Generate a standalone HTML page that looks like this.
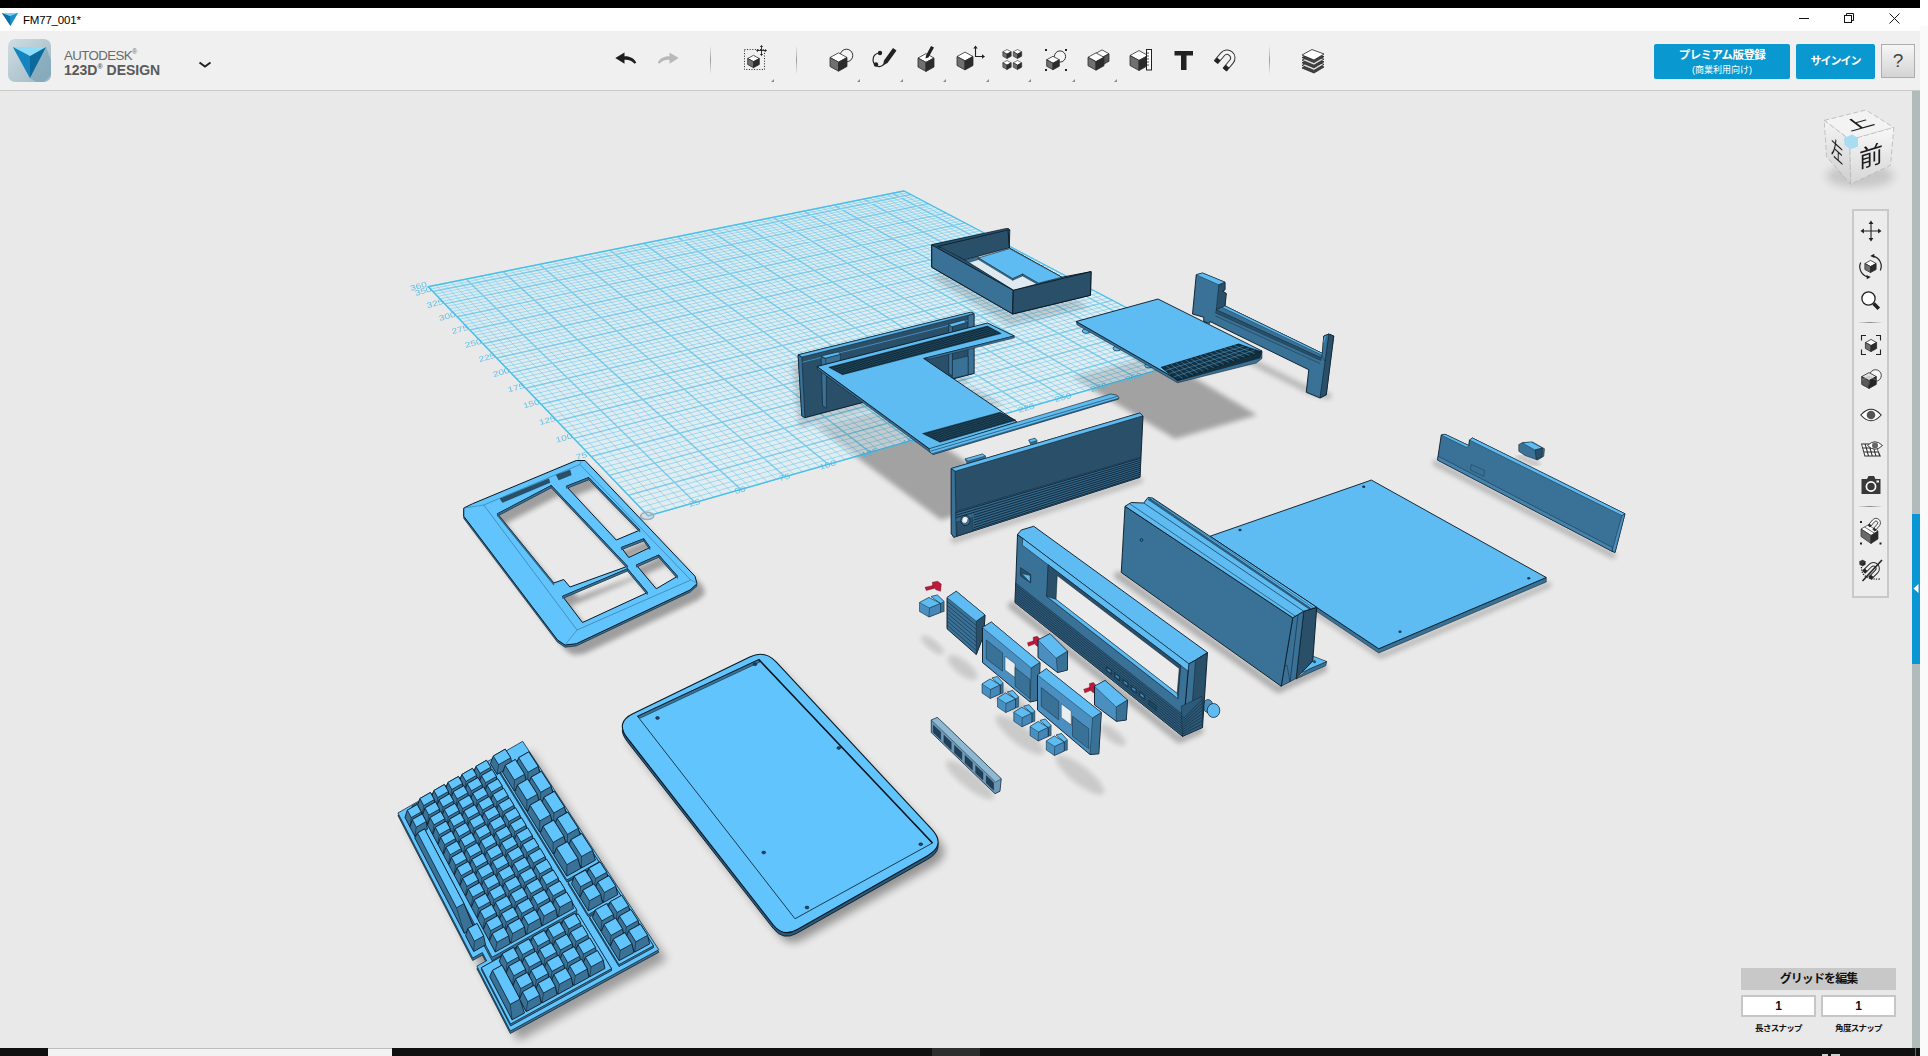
<!DOCTYPE html>
<html lang="ja"><head><meta charset="utf-8"><title>FM77_001*</title>
<style>
html,body{margin:0;padding:0}
body{width:1928px;height:1056px;overflow:hidden;position:relative;background:#e9e9e9;font-family:"Liberation Sans","Noto Sans CJK JP",sans-serif}
.abs{position:absolute}
</style></head><body>
<svg class="abs" style="left:0;top:0" width="1928" height="1056" viewBox="0 0 1928 1056">
<defs>
<filter id="b1" x="-20%" y="-20%" width="140%" height="140%"><feGaussianBlur stdDeviation="1.2"/></filter>
<filter id="b3" x="-20%" y="-20%" width="140%" height="140%"><feGaussianBlur stdDeviation="2.6"/></filter>
<filter id="b4" x="-20%" y="-20%" width="140%" height="140%"><feGaussianBlur stdDeviation="4"/></filter>
<filter id="b5" x="-20%" y="-20%" width="140%" height="140%"><feGaussianBlur stdDeviation="5"/></filter>
<linearGradient id="gfill" x1="0" y1="0" x2="1" y2="1"><stop offset="0" stop-color="#d2ecf7" stop-opacity="0.6"/><stop offset="1" stop-color="#e2f2f9" stop-opacity="0.55"/></linearGradient>
</defs>
<clipPath id="cg"><polygon points="648.16,515.89 1214.57,353.91 904.01,190.98 428.27,286.74"/></clipPath>
<clipPath id="cng"><path clip-rule="evenodd" d="M0 0H1928V1056H0Z M648.16 515.89L1214.57 353.91L904.01 190.98L428.27 286.74Z"/></clipPath>
<g clip-path="url(#cng)"><g opacity="0.30" filter="url(#b3)">
<polygon points="815,426 972,388 1003,405 908,422 1016,496 941,520" fill="#000"/>
<polygon points="1072,377 1156,355 1257,415 1175,439" fill="#000"/>
</g></g>
<polygon points="648.16,515.89 1214.57,353.91 904.01,190.98 428.27,286.74" fill="url(#gfill)"/>
<path d="M657.68 513.17L435.92 285.2M667.13 510.47L443.53 283.66M676.53 507.78L451.11 282.14M685.88 505.11L458.66 280.62M704.41 499.81L473.66 277.6M713.6 497.18L481.11 276.1M722.73 494.57L488.52 274.61M731.81 491.97L495.91 273.12M749.81 486.82L510.58 270.17M758.73 484.27L517.86 268.7M767.61 481.73L525.12 267.24M776.43 479.21L532.35 265.79M793.93 474.21L546.7 262.9M802.6 471.73L553.83 261.46M811.23 469.26L560.94 260.03M819.8 466.81L568.01 258.61M836.81 461.94L582.06 255.78M845.25 459.53L589.04 254.37M853.64 457.13L596 252.98M861.98 454.74L602.92 251.58M878.53 450.01L616.68 248.81M886.73 447.67L623.51 247.44M894.89 445.33L630.32 246.07M903.01 443.01L637.1 244.7M919.11 438.41L650.57 241.99M927.09 436.12L657.27 240.64M935.03 433.85L663.93 239.3M942.93 431.59L670.57 237.96M958.61 427.11L683.77 235.31M966.38 424.89L690.33 233.99M974.11 422.68L696.86 232.67M981.8 420.48L703.36 231.36M997.06 416.11L716.29 228.76M1004.63 413.95L722.72 227.47M1012.16 411.79L729.12 226.18M1019.65 409.65L735.49 224.9M1034.52 405.4L748.16 222.35M1041.89 403.29L754.45 221.08M1049.23 401.19L760.72 219.82M1056.53 399.11L766.97 218.56M1071.01 394.96L779.39 216.06M1078.2 392.91L785.56 214.82M1085.35 390.86L791.7 213.58M1092.46 388.83L797.83 212.35M1106.58 384.79L810 209.9M1113.59 382.79L816.05 208.68M1120.56 380.79L822.07 207.47M1127.49 378.81L828.08 206.26M1141.26 374.87L840.01 203.86M1148.09 372.92L845.94 202.67M1154.89 370.98L851.85 201.48M1161.65 369.04L857.74 200.29M1175.08 365.2L869.44 197.94M1181.74 363.3L875.26 196.76M1188.37 361.4L881.06 195.6M1194.97 359.51L886.83 194.44M1208.07 355.77L898.31 192.13M1214.57 353.91L904.01 190.98M644.12 511.68L1209.11 351.04M640.12 507.51L1203.69 348.19M636.15 503.37L1198.3 345.37M632.21 499.27L1192.96 342.57M624.45 491.18L1182.39 337.02M620.62 487.19L1177.17 334.28M616.83 483.24L1171.98 331.56M613.07 479.32L1166.83 328.86M605.64 471.58L1156.64 323.51M601.97 467.76L1151.6 320.87M598.34 463.97L1146.6 318.25M594.74 460.22L1141.63 315.64M587.63 452.81L1131.81 310.48M584.12 449.15L1126.95 307.93M580.64 445.52L1122.12 305.4M577.19 441.93L1117.33 302.89M570.37 434.82L1107.84 297.91M567.01 431.32L1103.15 295.45M563.67 427.84L1098.49 293M560.36 424.39L1093.86 290.58M553.82 417.57L1084.7 285.77M550.59 414.21L1080.17 283.39M547.39 410.87L1075.66 281.03M544.21 407.56L1071.19 278.68M537.93 401.01L1062.34 274.04M534.83 397.78L1057.96 271.74M531.75 394.58L1053.61 269.46M528.7 391.39L1049.28 267.19M522.67 385.11L1040.72 262.7M519.68 382L1036.49 260.48M516.73 378.92L1032.28 258.27M513.79 375.86L1028.09 256.07M507.99 369.81L1019.81 251.73M505.12 366.82L1015.71 249.58M502.28 363.86L1011.64 247.44M499.45 360.91L1007.59 245.32M493.87 355.1L999.57 241.11M491.11 352.22L995.6 239.03M488.37 349.36L991.66 236.96M485.65 346.53L987.74 234.9M480.27 340.93L979.98 230.83M477.61 338.15L976.13 228.81M474.97 335.4L972.31 226.81M472.35 332.67L968.51 224.81M467.17 327.27L960.99 220.87M464.6 324.6L957.26 218.91M462.06 321.95L953.56 216.97M459.53 319.31L949.88 215.04M454.53 314.1L942.58 211.21M452.06 311.53L938.97 209.32M449.61 308.97L935.38 207.43M447.17 306.43L931.81 205.56M442.34 301.4L924.73 201.85M439.96 298.91L921.23 200.01M437.59 296.44L917.74 198.18M435.23 293.99L914.28 196.36M430.58 289.14L907.42 192.76" stroke="#4fbfe9" stroke-width="0.9" opacity="0.5" fill="none"/>
<path d="M648.16 515.89L428.27 286.74M695.17 502.45L466.18 279.11M740.83 489.39L503.26 271.64M785.2 476.7L539.54 264.34M828.33 464.37L575.05 257.19M870.28 452.37L609.81 250.19M911.08 440.7L643.85 243.34M950.79 429.35L677.19 236.63M989.45 418.29L709.84 230.06M1027.11 407.52L741.84 223.62M1063.79 397.03L773.19 217.31M1099.54 386.81L803.92 211.12M1134.39 376.84L834.06 205.06M1168.38 367.12L863.6 199.11M1201.54 357.63L892.58 193.28M648.16 515.89L1214.57 353.91M628.32 495.21L1187.66 339.78M609.34 475.43L1161.72 326.18M591.17 456.5L1136.7 313.05M573.76 438.36L1112.57 300.39M557.07 420.97L1089.27 288.17M541.06 404.27L1066.75 276.35M525.67 388.24L1044.99 264.94M510.88 372.82L1023.94 253.89M496.65 357.99L1003.57 243.21M482.95 343.72L983.85 232.86M469.75 329.96L964.74 222.83M457.02 316.7L946.22 213.12M444.75 303.91L928.26 203.7M432.9 291.56L910.84 194.56M428.27 286.74L904.01 190.98" stroke="#3db8e6" stroke-width="1.4" opacity="0.6" fill="none"/>
<polygon points="648.16,515.89 1214.57,353.91 904.01,190.98 428.27,286.74" fill="none" stroke="#3bbdea" stroke-width="1.2" opacity="0.85"/>
<g font-family="Liberation Sans, sans-serif" font-size="8.5" fill="#4ab8e6" opacity="0.85" text-anchor="middle">
<text transform="translate(582.17 458.5) rotate(-16) scale(1.2,0.9)">75</text>
<text transform="translate(564.76 440.36) rotate(-16) scale(1.2,0.9)">100</text>
<text transform="translate(548.07 422.97) rotate(-16) scale(1.2,0.9)">125</text>
<text transform="translate(532.06 406.27) rotate(-16) scale(1.2,0.9)">150</text>
<text transform="translate(516.67 390.24) rotate(-16) scale(1.2,0.9)">175</text>
<text transform="translate(501.88 374.82) rotate(-16) scale(1.2,0.9)">200</text>
<text transform="translate(487.65 359.99) rotate(-16) scale(1.2,0.9)">225</text>
<text transform="translate(473.95 345.72) rotate(-16) scale(1.2,0.9)">250</text>
<text transform="translate(460.75 331.96) rotate(-16) scale(1.2,0.9)">275</text>
<text transform="translate(448.02 318.7) rotate(-16) scale(1.2,0.9)">300</text>
<text transform="translate(435.75 305.91) rotate(-16) scale(1.2,0.9)">325</text>
<text transform="translate(423.9 293.56) rotate(-16) scale(1.2,0.9)">350</text>
<text transform="translate(419.27 288.74) rotate(-16) scale(1.2,0.9)">360</text>
<text transform="translate(695.17 505.45) rotate(-16) scale(1.2,0.9)">25</text>
<text transform="translate(740.83 492.39) rotate(-16) scale(1.2,0.9)">50</text>
<text transform="translate(785.2 479.7) rotate(-16) scale(1.2,0.9)">75</text>
<text transform="translate(828.33 467.37) rotate(-16) scale(1.2,0.9)">100</text>
<text transform="translate(870.28 455.37) rotate(-16) scale(1.2,0.9)">125</text>
<text transform="translate(911.08 443.7) rotate(-16) scale(1.2,0.9)">150</text>
<text transform="translate(950.79 432.35) rotate(-16) scale(1.2,0.9)">175</text>
<text transform="translate(989.45 421.29) rotate(-16) scale(1.2,0.9)">200</text>
<text transform="translate(1027.11 410.52) rotate(-16) scale(1.2,0.9)">225</text>
<text transform="translate(1063.79 400.03) rotate(-16) scale(1.2,0.9)">250</text>
<text transform="translate(1099.54 389.81) rotate(-16) scale(1.2,0.9)">275</text>
<text transform="translate(1134.39 379.84) rotate(-16) scale(1.2,0.9)">300</text>
<text transform="translate(1168.38 370.12) rotate(-16) scale(1.2,0.9)">325</text>
<text transform="translate(1201.54 360.63) rotate(-16) scale(1.2,0.9)">350</text>
</g>
<ellipse cx="647.16" cy="515.89" rx="6.5" ry="3.6" fill="#a9bcc8" fill-opacity="0.35" stroke="#93acbb" stroke-width="1.6" opacity="0.9"/>
<g clip-path="url(#cg)"><g opacity="0.14" filter="url(#b3)">
<polygon points="815,426 972,388 1003,405 908,422 1016,496 941,520" fill="#000"/>
<polygon points="1072,377 1156,355 1257,415 1175,439" fill="#000"/>
<polygon points="929,276 1010,326 1089,307 1008,264" fill="#000"/>
<polygon points="792.09,364.77 965.13,322.2 967.99,383.45 798.94,427.64" fill="#000"/>
</g></g>
<polyline points="1118.25,575.5 1278.25,689.25 1323.25,668.5" fill="none" stroke="#000" stroke-width="8" stroke-linecap="round" stroke-linejoin="round" opacity="0.25" filter="url(#b3)"/>
<polyline points="1012,605.5 1179.5,739.25 1199.5,730.5" fill="none" stroke="#000" stroke-width="8" stroke-linecap="round" stroke-linejoin="round" opacity="0.25" filter="url(#b3)"/>
<polyline points="953.75,540.25 1140,480.25" fill="none" stroke="#000" stroke-width="6" stroke-linecap="round" stroke-linejoin="round" opacity="0.2" filter="url(#b3)"/>
<polyline points="1212,543 1380.75,656 1548.25,585" fill="none" stroke="#000" stroke-width="6" stroke-linecap="round" stroke-linejoin="round" opacity="0.2" filter="url(#b3)"/>
<polyline points="1435.5,463 1613,555.5" fill="none" stroke="#000" stroke-width="6" stroke-linecap="round" stroke-linejoin="round" opacity="0.22" filter="url(#b3)"/>
<polyline points="1215,343 1310,391 1328,396" fill="none" stroke="#000" stroke-width="7" stroke-linecap="round" stroke-linejoin="round" opacity="0.2" filter="url(#b3)"/>
<polyline points="1518.75,456.75 1537.5,464.25" fill="none" stroke="#000" stroke-width="5" stroke-linecap="round" stroke-linejoin="round" opacity="0.2" filter="url(#b3)"/>
<ellipse cx="932.5" cy="645" rx="14" ry="5" fill="#000" opacity="0.13" filter="url(#b3)" transform="rotate(38 932.5 645)"/>
<ellipse cx="962.5" cy="667.5" rx="18" ry="7" fill="#000" opacity="0.13" filter="url(#b3)" transform="rotate(38 962.5 667.5)"/>
<ellipse cx="1010" cy="700" rx="22" ry="8" fill="#000" opacity="0.13" filter="url(#b3)" transform="rotate(38 1010 700)"/>
<ellipse cx="1080" cy="775" rx="30" ry="9" fill="#000" opacity="0.13" filter="url(#b3)" transform="rotate(38 1080 775)"/>
<ellipse cx="1055" cy="695" rx="14" ry="6" fill="#000" opacity="0.13" filter="url(#b3)" transform="rotate(38 1055 695)"/>
<ellipse cx="1112.5" cy="735" rx="16" ry="6" fill="#000" opacity="0.13" filter="url(#b3)" transform="rotate(38 1112.5 735)"/>
<ellipse cx="1020" cy="735" rx="30" ry="9" fill="#000" opacity="0.13" filter="url(#b3)" transform="rotate(38 1020 735)"/>
<ellipse cx="970" cy="780" rx="30" ry="8" fill="#000" opacity="0.13" filter="url(#b3)" transform="rotate(38 970 780)"/>
<polygon points="798.09,354.77 971.13,312.2 973.99,313.44 973.99,373.45 804.94,417.64 801.83,415.77" fill="#2a4f68" stroke="#071722" stroke-width="0.9" stroke-linejoin="round" />
<polygon points="798.71,354.77 971.13,312.2 973.62,313.69 801.83,357.01" fill="#5ebcf3" stroke="#071722" stroke-width="0.5" stroke-linejoin="round" />
<polygon points="798.09,354.77 801.83,357.01 804.94,417.64 801.83,415.77" fill="#3a7196" stroke="#071722" stroke-width="0.5" stroke-linejoin="round" />
<polyline points="802.45,362.24 968.02,320.54" fill="none" stroke="#4a9bd0" stroke-width="0.8" />
<polygon points="821.12,357.26 826.35,358.76 826.35,408.3 822.62,405.81" fill="#3a7196" stroke="#071722" stroke-width="0.5" stroke-linejoin="round" />
<polygon points="821.12,356.02 838.55,352.04 840.42,354.4 825.48,358.26" fill="#5ebcf3" stroke="#071722" stroke-width="0.5" stroke-linejoin="round" />
<polygon points="825.48,358.26 840.42,354.4 840.42,362.24 826.35,365.98" fill="#3a7196" stroke="#071722" stroke-width="0.4" stroke-linejoin="round" />
<polygon points="948.72,324.9 952.45,326.76 952.45,375.94 948.72,373.45" fill="#3a7196" stroke="#071722" stroke-width="0.5" stroke-linejoin="round" />
<polygon points="948.72,324.27 964.28,319.92 966.15,322.41 951.83,326.76" fill="#5ebcf3" stroke="#071722" stroke-width="0.5" stroke-linejoin="round" />
<polygon points="968.02,315.56 973.99,313.69 973.99,373.45 968.02,374.69" fill="#3a7196" stroke="#071722" stroke-width="0.5" stroke-linejoin="round" />
<polygon points="952.45,359.75 968.02,356.02 968.02,374.69 952.45,378.43" fill="#3a7196" stroke="#071722" stroke-width="0.4" stroke-linejoin="round" />
<polygon points="931.74,244.86 1008.3,228.67 1009.8,229.92 1009.3,247.97 1061.83,277.22 1091.09,271.62 1090.46,295.27 1012.66,313.95 931.74,267.26" fill="#3a7196" stroke="#071722" stroke-width="0.9" stroke-linejoin="round" />
<polygon points="937.35,246.35 1008.05,229.67 1009.3,247.97 964.73,260.04" fill="#2a4f68" stroke="#071722" stroke-width="0.9" stroke-linejoin="round" />
<polygon points="931.74,244.86 1005.81,228.42 1008.3,228.67 1009.8,230.17 1008.05,229.92 937.35,246.35 936.1,247.35" fill="#2a4f68" stroke="#071722" stroke-width="0.5" stroke-linejoin="round" />
<polygon points="964.73,260.04 1009.3,247.97 1061.83,277.22 1013.53,290.29" fill="#dfeaf0" stroke="#071722" stroke-width="0.5" stroke-linejoin="round" />
<polygon points="978.43,257.93 1009.55,248.59 1061.83,277.22 1038.18,283.2 1022.62,274.11 1012.66,278.72" fill="#5ebcf3" stroke="#071722" stroke-width="0.6" stroke-linejoin="round" />
<polygon points="1012.66,278.72 1022.62,274.11 1022.62,275.98 1012.66,280.33" fill="#3a7196" stroke="#071722" stroke-width="0.4" stroke-linejoin="round" />
<polygon points="978.43,257.93 1012.66,278.72 1012.66,280.33 978.43,259.55" fill="#3a7196" stroke="#071722" stroke-width="0.4" stroke-linejoin="round" />
<polygon points="964.73,260.04 978.43,256.68 978.43,259.55 969.71,262.28" fill="#3a7196" stroke="#071722" stroke-width="0.4" stroke-linejoin="round" />
<polygon points="1022.62,275.98 1038.18,284.69 1038.18,283.2 1022.62,274.11" fill="#3a7196" stroke="#071722" stroke-width="0.4" stroke-linejoin="round" />
<polygon points="941.08,247.35 964.73,260.04 1013.53,290.29 1012.66,290.92 937.35,248.59" fill="#2a4f68" stroke="#071722" stroke-width="0.4" stroke-linejoin="round" />
<polygon points="931.74,244.86 1013.28,290.29 1012.66,313.95 931.74,267.26" fill="#3a7196" stroke="#071722" stroke-width="0.9" stroke-linejoin="round" />
<polygon points="1013.28,290.29 1091.09,271.62 1090.46,295.27 1012.66,313.95" fill="#2a4f68" stroke="#071722" stroke-width="0.9" stroke-linejoin="round" />
<polygon points="817,366.5 929.5,449.5 931,453 817.5,369.25" fill="#3a7196" stroke="#071722" stroke-width="0.5" stroke-linejoin="round" />
<polygon points="817,366.5 987.5,323 1014.25,336 923.75,358.5 1017,422 930,449.25" fill="#5ebcf3" stroke="#071722" stroke-width="0.9" stroke-linejoin="round" />
<polygon points="1014.25,336 1014.25,338 930,359 923.75,358.5" fill="#3a7196" stroke="#071722" stroke-width="0.4" stroke-linejoin="round" />
<polygon points="828.75,367.25 987.5,326 1001.25,333.5 842.5,374.75" fill="#0f2531" stroke="#071722" stroke-width="0.4" stroke-linejoin="round" />
<path d="M831.40 366.56L845.15 374.06M834.04 365.88L847.79 373.38M836.69 365.19L850.44 372.69M839.33 364.50L853.08 372.00M841.98 363.81L855.73 371.31M844.62 363.12L858.38 370.62M847.27 362.44L861.02 369.94M849.92 361.75L863.67 369.25M852.56 361.06L866.31 368.56M855.21 360.38L868.96 367.88M857.85 359.69L871.60 367.19M860.50 359.00L874.25 366.50M863.15 358.31L876.90 365.81M865.79 357.62L879.54 365.12M868.44 356.94L882.19 364.44M871.08 356.25L884.83 363.75M873.73 355.56L887.48 363.06M876.38 354.88L890.12 362.38M879.02 354.19L892.77 361.69M881.67 353.50L895.42 361.00M884.31 352.81L898.06 360.31M886.96 352.12L900.71 359.62M889.60 351.44L903.35 358.94M892.25 350.75L906.00 358.25M894.90 350.06L908.65 357.56M897.54 349.38L911.29 356.88M900.19 348.69L913.94 356.19M902.83 348.00L916.58 355.50M905.48 347.31L919.23 354.81M908.12 346.62L921.88 354.12M910.77 345.94L924.52 353.44M913.42 345.25L927.17 352.75M916.06 344.56L929.81 352.06M918.71 343.88L932.46 351.38M921.35 343.19L935.10 350.69M924.00 342.50L937.75 350.00M926.65 341.81L940.40 349.31M929.29 341.12L943.04 348.62M931.94 340.44L945.69 347.94M934.58 339.75L948.33 347.25M937.23 339.06L950.98 346.56M939.88 338.38L953.62 345.88M942.52 337.69L956.27 345.19M945.17 337.00L958.92 344.50M947.81 336.31L961.56 343.81M950.46 335.62L964.21 343.12M953.10 334.94L966.85 342.44M955.75 334.25L969.50 341.75M958.40 333.56L972.15 341.06M961.04 332.88L974.79 340.38M963.69 332.19L977.44 339.69M966.33 331.50L980.08 339.00M968.98 330.81L982.73 338.31M971.62 330.12L985.38 337.62M974.27 329.44L988.02 336.94M976.92 328.75L990.67 336.25M979.56 328.06L993.31 335.56M982.21 327.38L995.96 334.88M984.85 326.69L998.60 334.19M831.50 368.75L990.25 327.50M834.25 370.25L993.00 329.00M837.00 371.75L995.75 330.50M839.75 373.25L998.50 332.00" stroke="#3b7ea9" stroke-width="0.45" opacity="0.55" fill="none"/>
<polygon points="922.5,433.5 1000,412.25 1016,420.25 940,442.25" fill="#0f2531" stroke="#071722" stroke-width="0.4" stroke-linejoin="round" />
<path d="M924.78 432.88L942.24 441.60M927.06 432.25L944.47 440.96M929.34 431.62L946.71 440.31M931.62 431.00L948.94 439.66M933.90 430.38L951.18 439.01M936.18 429.75L953.41 438.37M938.46 429.12L955.65 437.72M940.74 428.50L957.88 437.07M943.01 427.88L960.12 436.43M945.29 427.25L962.35 435.78M947.57 426.62L964.59 435.13M949.85 426.00L966.82 434.49M952.13 425.38L969.06 433.84M954.41 424.75L971.29 433.19M956.69 424.12L973.53 432.54M958.97 423.50L975.76 431.90M961.25 422.88L978.00 431.25M963.53 422.25L980.24 430.60M965.81 421.62L982.47 429.96M968.09 421.00L984.71 429.31M970.37 420.38L986.94 428.66M972.65 419.75L989.18 428.01M974.93 419.12L991.41 427.37M977.21 418.50L993.65 426.72M979.49 417.88L995.88 426.07M981.76 417.25L998.12 425.43M984.04 416.62L1000.35 424.78M986.32 416.00L1002.59 424.13M988.60 415.38L1004.82 423.49M990.88 414.75L1007.06 422.84M993.16 414.12L1009.29 422.19M995.44 413.50L1011.53 421.54M997.72 412.88L1013.76 420.90M925.42 434.96L1002.67 413.58M928.33 436.42L1005.33 414.92M931.25 437.88L1008.00 416.25M934.17 439.33L1010.67 417.58M937.08 440.79L1013.33 418.92" stroke="#3b7ea9" stroke-width="0.45" opacity="0.55" fill="none"/>
<polygon points="929,448.75 1110.75,394 1116.25,395 1119,397.25 1118.5,399 933,454.5 929.75,452" fill="#5ebcf3" stroke="#071722" stroke-width="0.6" stroke-linejoin="round" />
<polyline points="930.25,451.25 1117.5,396.25" fill="none" stroke="#071722" stroke-width="0.5" />
<polygon points="932,453.5 1118.25,398.25 1118.5,399 933,454.5" fill="#3a7196" stroke="#071722" stroke-width="0.3" stroke-linejoin="round" />
<ellipse cx="1086.25" cy="331" rx="4" ry="2.4" fill="#5ebcf3" stroke="#071722" stroke-width="0.6"/>
<ellipse cx="1117" cy="348.5" rx="4" ry="2.4" fill="#5ebcf3" stroke="#071722" stroke-width="0.6"/>
<ellipse cx="1148.75" cy="365.5" rx="4" ry="2.4" fill="#5ebcf3" stroke="#071722" stroke-width="0.6"/>
<polygon points="1076.25,321.5 1177.5,379.75 1262,351 1262,358.5 1256.25,363 1177.5,382.75 1077,324.75" fill="#3a7196" stroke="#071722" stroke-width="0.5" stroke-linejoin="round" />
<polygon points="1076.25,321.5 1158,299 1262,351 1177.5,379.75" fill="#5ebcf3" stroke="#071722" stroke-width="0.9" stroke-linejoin="round" />
<polygon points="1161.25,367.25 1238.75,344 1262,351.75 1260,358 1177.5,381" fill="#14303f" stroke="#071722" stroke-width="0.4" stroke-linejoin="round" />
<polygon points="1161.25,367.25 1238.75,344 1260,352 1177.5,380.25" fill="#14303f" stroke="#071722" stroke-width="0.4" stroke-linejoin="round" />
<path d="M1166.09 365.80L1182.66 378.48M1170.94 364.34L1187.81 376.72M1175.78 362.89L1192.97 374.95M1180.62 361.44L1198.12 373.19M1185.47 359.98L1203.28 371.42M1190.31 358.53L1208.44 369.66M1195.16 357.08L1213.59 367.89M1200.00 355.62L1218.75 366.12M1204.84 354.17L1223.91 364.36M1209.69 352.72L1229.06 362.59M1214.53 351.27L1234.22 360.83M1219.38 349.81L1239.38 359.06M1224.22 348.36L1244.53 357.30M1229.06 346.91L1249.69 355.53M1233.91 345.45L1254.84 353.77M1165.31 370.50L1244.06 346.00M1169.38 373.75L1249.38 348.00M1173.44 377.00L1254.69 350.00" stroke="#4f9bcc" stroke-width="0.7" opacity="0.75" fill="none"/>
<polygon points="1196.25,274.75 1202.5,273 1225,282.25 1225,289.75 1222.5,291 1226.25,293.5 1225,306 1322.5,353.5 1323.75,336 1328.75,334 1333.75,336 1326.25,394.75 1320,398 1306.25,392.25 1308.75,369.75 1210,321.5 1209.5,323.5 1203.75,321.5 1203.75,317.25 1192.5,314" fill="#3a7196" stroke="#071722" stroke-width="0.9" stroke-linejoin="round" />
<polygon points="1196.25,274.75 1202.5,273 1225,282.25 1218.75,284.75" fill="#5ebcf3" stroke="#071722" stroke-width="0.4" stroke-linejoin="round" />
<polygon points="1218.75,284.75 1225,282.25 1225,289.75 1222.5,291 1226.25,293.5 1225,306 1216.25,309.75" fill="#2a4f68" stroke="#071722" stroke-width="0.4" stroke-linejoin="round" />
<polygon points="1216.25,309.75 1225,306 1322.5,353.5 1321.25,358" fill="#3a7196" stroke="#071722" stroke-width="0.4" stroke-linejoin="round" />
<polygon points="1222,307.25 1225,306 1322.5,353.5 1322.25,355.25" fill="#5ebcf3" stroke="#071722" stroke-width="0.4" stroke-linejoin="round" />
<polygon points="1216.25,309.75 1321.25,358 1320.75,360.5 1215.5,313" fill="#2a4f68" stroke="#071722" stroke-width="0.3" stroke-linejoin="round" />
<polyline points="1215.5,316 1320,363.5" fill="none" stroke="#1a3a50" stroke-width="0.6" />
<polygon points="1328.75,334 1333.75,336 1326.25,394.75 1320,398" fill="#2a4f68" stroke="#071722" stroke-width="0.5" stroke-linejoin="round" />
<polygon points="1323.75,336 1328.75,334 1325,361 1322,356" fill="#3a7196" stroke="#071722" stroke-width="0.4" stroke-linejoin="round" />
<polygon points="1324.25,336.5 1326.5,335.25 1324.5,342.25 1323,343.5" fill="#5ebcf3" stroke="#071722" stroke-width="0.3" stroke-linejoin="round" />
<polygon points="965,459 982.5,454 985.5,456 985.5,459 967.5,464" fill="#3a7196" stroke="#071722" stroke-width="0.4" stroke-linejoin="round" />
<polygon points="965,459 982.5,454 985.5,456 968,461" fill="#5ebcf3" stroke="#071722" stroke-width="0.4" stroke-linejoin="round" />
<polygon points="1028.75,440 1035,438.25 1037,440.5 1037,442.5 1030.5,444.5" fill="#3a7196" stroke="#071722" stroke-width="0.4" stroke-linejoin="round" />
<polygon points="1028.75,440 1035,438.25 1037,440.5 1030.5,442.5" fill="#5ebcf3" stroke="#071722" stroke-width="0.4" stroke-linejoin="round" />
<polygon points="951.25,468.5 1140,413 1143,416 1140,477.25 953.75,537.25 951.25,533.5" fill="#2a4f68" stroke="#071722" stroke-width="0.9" stroke-linejoin="round" />
<polygon points="951.25,468.5 1140,413 1143,415.75 955,471.25" fill="#5ebcf3" stroke="#071722" stroke-width="0.5" stroke-linejoin="round" />
<polygon points="951.25,468.5 955,471.25 956.5,536.5 953.75,537.25 951.25,533.5" fill="#3a7196" stroke="#071722" stroke-width="0.5" stroke-linejoin="round" />
<polygon points="955.75,511.5 1140.75,457.25 1140,477.25 956.5,536.5" fill="#34678a" stroke="#071722" stroke-width="0.4" stroke-linejoin="round" />
<polyline points="955.79,512.75 1140.71,458.25" fill="none" stroke="#0e2433" stroke-width="0.9" />
<polyline points="955.86,515.25 1140.64,460.25" fill="none" stroke="#0e2433" stroke-width="0.9" />
<polyline points="955.94,517.75 1140.56,462.25" fill="none" stroke="#0e2433" stroke-width="0.9" />
<polyline points="973.51,515.12 1140.49,464.25" fill="none" stroke="#0e2433" stroke-width="0.9" />
<polyline points="973.59,517.62 1140.41,466.25" fill="none" stroke="#0e2433" stroke-width="0.9" />
<polyline points="973.66,520.12 1140.34,468.25" fill="none" stroke="#0e2433" stroke-width="0.9" />
<polyline points="973.74,522.62 1140.26,470.25" fill="none" stroke="#0e2433" stroke-width="0.9" />
<polyline points="973.81,525.12 1140.19,472.25" fill="none" stroke="#0e2433" stroke-width="0.9" />
<polyline points="973.89,527.62 1140.11,474.25" fill="none" stroke="#0e2433" stroke-width="0.9" />
<polyline points="956.46,535.25 1140.04,476.25" fill="none" stroke="#0e2433" stroke-width="0.9" />
<polygon points="956.5,522.25 972.5,517.5 973,531 957,536" fill="#2a4f68" stroke="#071722" stroke-width="0.3" stroke-linejoin="round" />
<ellipse cx="965.5" cy="520.5" rx="4.6" ry="5" fill="#3a7196" stroke="#071722" stroke-width="0.7"/>
<ellipse cx="964.7" cy="520.2" rx="3" ry="3.6" fill="#eef2f4" stroke="#071722" stroke-width="0.5" transform="rotate(25 965.5 520.5)"/>
<polygon points="1441.25,435 1445,434.25 1468.75,445.5 1469.5,440 1472.5,438 1625,513.75 1615,552.5 1612,551.25 1437.5,460" fill="#3a7196" stroke="#071722" stroke-width="0.9" stroke-linejoin="round" />
<polygon points="1441.25,435 1445,434.25 1468.75,445.5 1467,447.5" fill="#5ebcf3" stroke="#071722" stroke-width="0.4" stroke-linejoin="round" />
<polygon points="1469.5,440 1472.5,438 1625,513.75 1622,515.5" fill="#5ebcf3" stroke="#071722" stroke-width="0.4" stroke-linejoin="round" />
<polygon points="1622,515.5 1625,513.75 1615,552.5 1612,550.75" fill="#4a8fc0" stroke="#071722" stroke-width="0.4" stroke-linejoin="round" />
<polygon points="1438.25,456.25 1612.5,547.5 1612,551.25 1437.5,460" fill="#4583ad" stroke="#071722" stroke-width="0.4" stroke-linejoin="round" />
<polygon points="1471.25,464.5 1484.5,470.5 1483.75,476.25 1470.5,470" fill="none" stroke="#1f4560" stroke-width="0.6" stroke-linejoin="round" />
<polygon points="1518.75,444.5 1522.5,442.5 1532.5,442 1544.5,448.75 1543.75,456.25 1537.5,460 1525,455.5 1518.75,451.25" fill="#3a7196" stroke="#071722" stroke-width="0.5" stroke-linejoin="round" />
<polygon points="1522.5,443 1531.25,442 1542.5,448 1535,450" fill="#5ebcf3" stroke="#071722" stroke-width="0.4" stroke-linejoin="round" />
<polygon points="1535,450 1542.5,448 1542,457 1536.25,459.5" fill="#2a4f68" stroke="#071722" stroke-width="0.4" stroke-linejoin="round" />
<polygon points="1210,536.25 1378.75,648.75 1546.25,577.5 1546.25,582 1378.75,653 1210,540" fill="#3a7196" stroke="#071722" stroke-width="0.5" stroke-linejoin="round" />
<polygon points="1210,536.25 1368,481.25 1371.25,480 1546.25,577.5 1378.75,648.75" fill="#5ebcf3" stroke="#071722" stroke-width="0.9" stroke-linejoin="round" />
<ellipse cx="1363.75" cy="486.75" rx="1.6" ry="1.2" fill="#1a3a50"/>
<ellipse cx="1240" cy="530" rx="1.6" ry="1.2" fill="#1a3a50"/>
<ellipse cx="1528.75" cy="578.25" rx="1.6" ry="1.2" fill="#1a3a50"/>
<ellipse cx="1400" cy="631.75" rx="1.6" ry="1.2" fill="#1a3a50"/>
<polygon points="1308.75,669 1326.75,661.5 1325.75,665.75 1308.75,673.25 1296,679" fill="#3a7196" stroke="#071722" stroke-width="0.5" stroke-linejoin="round" />
<polygon points="1308.75,654.5 1326.75,661.5 1308.75,669.25 1302.5,672.5" fill="#5ebcf3" stroke="#071722" stroke-width="0.6" stroke-linejoin="round" />
<circle cx="1314.5" cy="661.75" r="1.2" fill="#2a4f68" stroke="#071722" stroke-width="0.4"/>
<polygon points="1303.75,611.25 1316.75,607.25 1312.75,661 1296,678.5" fill="#2a4f68" stroke="#071722" stroke-width="0.9" stroke-linejoin="round" />
<polygon points="1292.75,617.75 1303.75,611.25 1296,678.5 1281,686.25" fill="#3a7196" stroke="#071722" stroke-width="0.6" stroke-linejoin="round" />
<polyline points="1298,615 1290,682" fill="none" stroke="#071722" stroke-width="0.5" />
<polyline points="1290,682 1287,665 1283.75,667" fill="none" stroke="#071722" stroke-width="0.4" />
<polygon points="1125,506.25 1292.75,617.75 1281.25,686.25 1121.25,572.5" fill="#3a7196" stroke="#071722" stroke-width="0.9" stroke-linejoin="round" />
<polygon points="1125,506.25 1131.25,502.5 1143.75,503 1148,497.5 1152.5,498 1316.75,607.25 1303.75,611.25 1292.75,617.75" fill="#5ebcf3" stroke="#071722" stroke-width="0.9" stroke-linejoin="round" />
<polyline points="1130,504 1295.5,616.25" fill="none" stroke="#071722" stroke-width="0.5" />
<polyline points="1143.75,503 1303.75,611.25" fill="none" stroke="#071722" stroke-width="0.6" />
<polygon points="1148,499.5 1309.5,609.25 1311.25,608.5 1150,498.5" fill="#2f6388" stroke="#071722" stroke-width="0.4" stroke-linejoin="round" />
<polyline points="1152.5,498.75 1313.75,608" fill="none" stroke="#071722" stroke-width="0.4" />
<circle cx="1141.5" cy="540" r="1.4" fill="#3a7196" stroke="#071722" stroke-width="0.6"/>
<ellipse cx="1208" cy="706" rx="5" ry="6.5" fill="#4a8fc0" stroke="#071722" stroke-width="0.6"/>
<ellipse cx="1213.5" cy="710.5" rx="6.3" ry="7" fill="#5ebcf3" stroke="#071722" stroke-width="0.7"/>
<polygon points="1188.75,663.75 1207.5,652.5 1202.5,727.5 1182.5,736.25" fill="#2a4f68" stroke="#071722" stroke-width="0.9" stroke-linejoin="round" />
<polygon points="1188.75,663.75 1195.5,660 1190,733 1182.5,736.25" fill="#3a7196" stroke="#071722" stroke-width="0.4" stroke-linejoin="round" />
<polygon points="1017.5,534.5 1188.75,663.75 1182.5,736.25 1015,602.5" fill="#3a7196" stroke="#071722" stroke-width="0.9" stroke-linejoin="round" />
<polygon points="1017.5,534.5 1021.25,530 1033.75,526.25 1207.5,652.5 1195.5,660 1188.75,663.75" fill="#5ebcf3" stroke="#071722" stroke-width="0.9" stroke-linejoin="round" />
<polygon points="1022.64,538.38 1188.75,663.75 1188.12,671 1022.38,545.19" fill="#5ebcf3" stroke="#071722" stroke-width="0.5" stroke-linejoin="round" />
<polygon points="1048.01,564.65 1180.78,665.42 1177.98,698.68 1046.55,596.3" fill="#2a4f68" stroke="#071722" stroke-width="0.5" stroke-linejoin="round" />
<polygon points="1057.22,575.58 1179.25,668.49 1177.16,693.42 1056.05,599.4" fill="#ebebeb" stroke="#071722" stroke-width="0.5" stroke-linejoin="round" />
<polygon points="1046.55,596.3 1056.05,599.4 1177.16,693.42 1177.98,698.68" fill="#5ebcf3" stroke="#071722" stroke-width="0.4" stroke-linejoin="round" />
<polygon points="1015.71,583.12 1184.28,715.59 1182.5,736.25 1015,602.5" fill="#2f5b7a" stroke="#071722" stroke-width="0.4" stroke-linejoin="round" />
<polygon points="1181.25,706.25 1202,696.25 1202.5,727.5 1182.5,736.25" fill="#2d5a78" stroke="#071722" stroke-width="0.4" stroke-linejoin="round" />
<polyline points="1015.63,585.27 1184.08,717.88 1202.06,699.72" fill="none" stroke="#10283a" stroke-width="0.6" />
<polyline points="1015.55,587.43 1183.89,720.18 1202.11,703.19" fill="none" stroke="#10283a" stroke-width="0.6" />
<polyline points="1015.48,589.58 1183.69,722.47 1202.17,706.67" fill="none" stroke="#10283a" stroke-width="0.6" />
<polyline points="1015.4,591.73 1183.49,724.77 1202.22,710.14" fill="none" stroke="#10283a" stroke-width="0.6" />
<polyline points="1015.32,593.89 1183.29,727.07 1202.28,713.61" fill="none" stroke="#10283a" stroke-width="0.6" />
<polyline points="1015.24,596.04 1183.09,729.36 1202.33,717.08" fill="none" stroke="#10283a" stroke-width="0.6" />
<polyline points="1015.16,598.19 1182.9,731.66 1202.39,720.56" fill="none" stroke="#10283a" stroke-width="0.6" />
<polyline points="1015.08,600.35 1182.7,733.95 1202.44,724.03" fill="none" stroke="#10283a" stroke-width="0.6" />
<polygon points="1020.5,567.5 1030.75,574.5 1030.75,583 1020.5,576" fill="#2a4f68" stroke="#071722" stroke-width="0.4" stroke-linejoin="round" />
<polygon points="1022,573.75 1030,575.5 1030,582" fill="#5ebcf3" stroke="#071722" stroke-width="0.3" stroke-linejoin="round" />
<polygon points="1106.25,666.25 1111.75,670.25 1111.75,674.75 1106.25,670.75" fill="#1f4560" stroke="#071722" stroke-width="0.3" stroke-linejoin="round" />
<polygon points="1107.25,668.25 1110.75,670.75 1110.75,673 1107.25,670.5" fill="#4a8fc0" stroke="#071722" stroke-width="0.2" stroke-linejoin="round" />
<polygon points="1114.5,672.5 1120,676.5 1120,681 1114.5,677" fill="#1f4560" stroke="#071722" stroke-width="0.3" stroke-linejoin="round" />
<polygon points="1115.5,674.5 1119,677 1119,679.25 1115.5,676.75" fill="#4a8fc0" stroke="#071722" stroke-width="0.2" stroke-linejoin="round" />
<polygon points="1122.75,678.75 1128.25,682.75 1128.25,687.25 1122.75,683.25" fill="#1f4560" stroke="#071722" stroke-width="0.3" stroke-linejoin="round" />
<polygon points="1123.75,680.75 1127.25,683.25 1127.25,685.5 1123.75,683" fill="#4a8fc0" stroke="#071722" stroke-width="0.2" stroke-linejoin="round" />
<polygon points="1131,685 1136.5,689 1136.5,693.5 1131,689.5" fill="#1f4560" stroke="#071722" stroke-width="0.3" stroke-linejoin="round" />
<polygon points="1132,687 1135.5,689.5 1135.5,691.75 1132,689.25" fill="#4a8fc0" stroke="#071722" stroke-width="0.2" stroke-linejoin="round" />
<polygon points="1139.25,691.25 1144.75,695.25 1144.75,699.75 1139.25,695.75" fill="#1f4560" stroke="#071722" stroke-width="0.3" stroke-linejoin="round" />
<polygon points="1140.25,693.25 1143.75,695.75 1143.75,698 1140.25,695.5" fill="#4a8fc0" stroke="#071722" stroke-width="0.2" stroke-linejoin="round" />
<polygon points="1148.75,700 1156.25,705.5 1156.25,710.5 1148.75,705" fill="#1f4560" stroke="#071722" stroke-width="0.3" stroke-linejoin="round" />
<polygon points="925,587.25 933.12,585.45 933.94,588.45 926.3,590.45" fill="#c0183c" stroke="#5a0a1a" stroke-width="0.4" stroke-linejoin="round" />
<polygon points="932.31,582.25 937.67,581.25 941.25,584.05 940.6,591.25 936.05,589.75 932.8,586.75" fill="#c0183c" stroke="#5a0a1a" stroke-width="0.4" stroke-linejoin="round" />
<polygon points="931.05,596.5 937.35,595 944.17,601.5 944.17,611.5 940.5,612.5 940.5,603.5" fill="#3a7196" stroke="#071722" stroke-width="0.4" stroke-linejoin="round" />
<polygon points="931.05,596.5 937.35,595 944.17,601.5 940.5,603.5" fill="#5ebcf3" stroke="#071722" stroke-width="0.4" stroke-linejoin="round" />
<polygon points="919.5,602.5 928.95,597.5 940.5,603.5 940.5,612.5 928.95,617 919.5,611.5" fill="#4a8fc0" stroke="#071722" stroke-width="0.5" stroke-linejoin="round" />
<polygon points="919.5,602.5 928.95,597.5 940.5,603.5 929.48,608" fill="#5ebcf3" stroke="#071722" stroke-width="0.4" stroke-linejoin="round" />
<polygon points="929.48,608 940.5,603.5 940.5,612.5 928.95,617" fill="#4487b8" stroke="#071722" stroke-width="0.4" stroke-linejoin="round" />
<polygon points="947,597.5 956.25,591.25 985,615 983.75,635 976.25,654.5 947,628.75" fill="#3a7196" stroke="#071722" stroke-width="0.9" stroke-linejoin="round" />
<polygon points="947,597.5 956.25,591.25 985,615 976.25,621.25" fill="#5ebcf3" stroke="#071722" stroke-width="0.4" stroke-linejoin="round" />
<polygon points="976.25,621.25 985,615 983.75,635 976.25,654.5" fill="#2a4f68" stroke="#071722" stroke-width="0.4" stroke-linejoin="round" />
<polyline points="947,601.41 976.25,625.41" fill="none" stroke="#10283a" stroke-width="0.6" />
<polyline points="947,605.31 976.25,629.56" fill="none" stroke="#10283a" stroke-width="0.6" />
<polyline points="947,609.22 976.25,633.72" fill="none" stroke="#10283a" stroke-width="0.6" />
<polyline points="947,613.12 976.25,637.88" fill="none" stroke="#10283a" stroke-width="0.6" />
<polyline points="947,617.03 976.25,642.03" fill="none" stroke="#10283a" stroke-width="0.6" />
<polyline points="947,620.94 976.25,646.19" fill="none" stroke="#10283a" stroke-width="0.6" />
<polyline points="947,624.84 976.25,650.34" fill="none" stroke="#10283a" stroke-width="0.6" />
<polygon points="982.5,627.5 991.25,622 1040,662.5 1038.75,700 1030,702 982.5,662.5" fill="#4a8fc0" stroke="#071722" stroke-width="0.9" stroke-linejoin="round" />
<polygon points="982.5,627.5 991.25,622 1040,662.5 1031.25,668" fill="#5ebcf3" stroke="#071722" stroke-width="0.4" stroke-linejoin="round" />
<polygon points="1031.25,668 1040,662.5 1038.75,700 1030,702" fill="#3a7196" stroke="#071722" stroke-width="0.4" stroke-linejoin="round" />
<polygon points="986.25,640 1002.5,653 1002.5,671.25 986.25,658.75" fill="#3a7196" stroke="#071722" stroke-width="0.4" stroke-linejoin="round" />
<polygon points="1005,656.25 1015,663.75 1015,677.5 1005,670" fill="#e6eef2" stroke="#071722" stroke-width="0.4" stroke-linejoin="round" />
<polygon points="1015,667.5 1030,679.5 1030,698.75 1015,686.25" fill="#3a7196" stroke="#071722" stroke-width="0.4" stroke-linejoin="round" />
<polygon points="1027.5,642.7 1033.75,640.76 1034.38,643.99 1028.5,646.14" fill="#c0183c" stroke="#5a0a1a" stroke-width="0.4" stroke-linejoin="round" />
<polygon points="1033.12,637.33 1037.25,636.25 1040,639.26 1039.5,647 1036,645.39 1033.5,642.16" fill="#c0183c" stroke="#5a0a1a" stroke-width="0.4" stroke-linejoin="round" />
<polygon points="1038,640 1050,633.75 1067.5,651.25 1067.5,670 1057.5,672.5 1038,657.5" fill="#4a8fc0" stroke="#071722" stroke-width="0.9" stroke-linejoin="round" />
<polygon points="1038,640 1050,633.75 1067.5,651.25 1056.25,658.25" fill="#5ebcf3" stroke="#071722" stroke-width="0.4" stroke-linejoin="round" />
<polygon points="1056.25,658.25 1067.5,651.25 1067.5,670 1057.5,672.5" fill="#3a7196" stroke="#071722" stroke-width="0.4" stroke-linejoin="round" />
<polygon points="1037.5,675 1046.25,668.75 1101.25,712.5 1098.75,753.75 1090,754.5 1037.5,710" fill="#4a8fc0" stroke="#071722" stroke-width="0.9" stroke-linejoin="round" />
<polygon points="1037.5,675 1046.25,668.75 1101.25,712.5 1092.5,718" fill="#5ebcf3" stroke="#071722" stroke-width="0.4" stroke-linejoin="round" />
<polygon points="1092.5,718 1101.25,712.5 1098.75,753.75 1090,754.5" fill="#3a7196" stroke="#071722" stroke-width="0.4" stroke-linejoin="round" />
<polygon points="1041.25,687.5 1058.75,701.25 1058.75,720 1041.25,706.25" fill="#3a7196" stroke="#071722" stroke-width="0.4" stroke-linejoin="round" />
<polygon points="1061.25,703.75 1071.25,711.25 1071.25,725 1061.25,717.5" fill="#e6eef2" stroke="#071722" stroke-width="0.4" stroke-linejoin="round" />
<polygon points="1072.5,716.25 1088.75,728.75 1088.75,748.75 1072.5,736.25" fill="#3a7196" stroke="#071722" stroke-width="0.4" stroke-linejoin="round" />
<polygon points="1083.75,689.25 1090,687.23 1090.62,690.6 1084.75,692.85" fill="#c0183c" stroke="#5a0a1a" stroke-width="0.4" stroke-linejoin="round" />
<polygon points="1089.38,683.62 1093.5,682.5 1096.25,685.65 1095.75,693.75 1092.25,692.06 1089.75,688.69" fill="#c0183c" stroke="#5a0a1a" stroke-width="0.4" stroke-linejoin="round" />
<polygon points="1094.5,686.25 1105,680.5 1127.5,700 1126.25,720 1116.25,721.25 1094.5,705" fill="#4a8fc0" stroke="#071722" stroke-width="0.9" stroke-linejoin="round" />
<polygon points="1094.5,686.25 1105,680.5 1127.5,700 1116.25,707" fill="#5ebcf3" stroke="#071722" stroke-width="0.4" stroke-linejoin="round" />
<polygon points="1116.25,707 1127.5,700 1126.25,720 1116.25,721.25" fill="#3a7196" stroke="#071722" stroke-width="0.4" stroke-linejoin="round" />
<polygon points="991.9,678 997.3,676.5 1003.15,683 1003.15,693 1000,694 1000,685" fill="#3a7196" stroke="#071722" stroke-width="0.4" stroke-linejoin="round" />
<polygon points="991.9,678 997.3,676.5 1003.15,683 1000,685" fill="#5ebcf3" stroke="#071722" stroke-width="0.4" stroke-linejoin="round" />
<polygon points="982,684 990.1,679 1000,685 1000,694 990.1,698.5 982,693" fill="#4a8fc0" stroke="#071722" stroke-width="0.5" stroke-linejoin="round" />
<polygon points="982,684 990.1,679 1000,685 990.55,689.5" fill="#5ebcf3" stroke="#071722" stroke-width="0.4" stroke-linejoin="round" />
<polygon points="990.55,689.5 1000,685 1000,694 990.1,698.5" fill="#4487b8" stroke="#071722" stroke-width="0.4" stroke-linejoin="round" />
<polygon points="1007.4,692 1012.8,690.5 1018.65,697 1018.65,707 1015.5,708 1015.5,699" fill="#3a7196" stroke="#071722" stroke-width="0.4" stroke-linejoin="round" />
<polygon points="1007.4,692 1012.8,690.5 1018.65,697 1015.5,699" fill="#5ebcf3" stroke="#071722" stroke-width="0.4" stroke-linejoin="round" />
<polygon points="997.5,698 1005.6,693 1015.5,699 1015.5,708 1005.6,712.5 997.5,707" fill="#4a8fc0" stroke="#071722" stroke-width="0.5" stroke-linejoin="round" />
<polygon points="997.5,698 1005.6,693 1015.5,699 1006.05,703.5" fill="#5ebcf3" stroke="#071722" stroke-width="0.4" stroke-linejoin="round" />
<polygon points="1006.05,703.5 1015.5,699 1015.5,708 1005.6,712.5" fill="#4487b8" stroke="#071722" stroke-width="0.4" stroke-linejoin="round" />
<polygon points="1023.65,706.25 1029.05,704.75 1034.9,711.25 1034.9,721.25 1031.75,722.25 1031.75,713.25" fill="#3a7196" stroke="#071722" stroke-width="0.4" stroke-linejoin="round" />
<polygon points="1023.65,706.25 1029.05,704.75 1034.9,711.25 1031.75,713.25" fill="#5ebcf3" stroke="#071722" stroke-width="0.4" stroke-linejoin="round" />
<polygon points="1013.75,712.25 1021.85,707.25 1031.75,713.25 1031.75,722.25 1021.85,726.75 1013.75,721.25" fill="#4a8fc0" stroke="#071722" stroke-width="0.5" stroke-linejoin="round" />
<polygon points="1013.75,712.25 1021.85,707.25 1031.75,713.25 1022.3,717.75" fill="#5ebcf3" stroke="#071722" stroke-width="0.4" stroke-linejoin="round" />
<polygon points="1022.3,717.75 1031.75,713.25 1031.75,722.25 1021.85,726.75" fill="#4487b8" stroke="#071722" stroke-width="0.4" stroke-linejoin="round" />
<polygon points="1039.9,720.5 1045.3,719 1051.15,725.5 1051.15,735.5 1048,736.5 1048,727.5" fill="#3a7196" stroke="#071722" stroke-width="0.4" stroke-linejoin="round" />
<polygon points="1039.9,720.5 1045.3,719 1051.15,725.5 1048,727.5" fill="#5ebcf3" stroke="#071722" stroke-width="0.4" stroke-linejoin="round" />
<polygon points="1030,726.5 1038.1,721.5 1048,727.5 1048,736.5 1038.1,741 1030,735.5" fill="#4a8fc0" stroke="#071722" stroke-width="0.5" stroke-linejoin="round" />
<polygon points="1030,726.5 1038.1,721.5 1048,727.5 1038.55,732" fill="#5ebcf3" stroke="#071722" stroke-width="0.4" stroke-linejoin="round" />
<polygon points="1038.55,732 1048,727.5 1048,736.5 1038.1,741" fill="#4487b8" stroke="#071722" stroke-width="0.4" stroke-linejoin="round" />
<polygon points="1056.15,735 1061.55,733.5 1067.4,740 1067.4,750 1064.25,751 1064.25,742" fill="#3a7196" stroke="#071722" stroke-width="0.4" stroke-linejoin="round" />
<polygon points="1056.15,735 1061.55,733.5 1067.4,740 1064.25,742" fill="#5ebcf3" stroke="#071722" stroke-width="0.4" stroke-linejoin="round" />
<polygon points="1046.25,741 1054.35,736 1064.25,742 1064.25,751 1054.35,755.5 1046.25,750" fill="#4a8fc0" stroke="#071722" stroke-width="0.5" stroke-linejoin="round" />
<polygon points="1046.25,741 1054.35,736 1064.25,742 1054.8,746.5" fill="#5ebcf3" stroke="#071722" stroke-width="0.4" stroke-linejoin="round" />
<polygon points="1054.8,746.5 1064.25,742 1064.25,751 1054.35,755.5" fill="#4487b8" stroke="#071722" stroke-width="0.4" stroke-linejoin="round" />
<polygon points="931.25,720 937.5,717.5 1001.25,778.75 1000,791.25 995,793.75 931.25,732.5" fill="#6b97b4" stroke="#071722" stroke-width="0.7" stroke-linejoin="round" />
<polygon points="931.25,720 937.5,717.5 1001.25,778.75 995.5,782" fill="#8fb8d2" stroke="#071722" stroke-width="0.4" stroke-linejoin="round" />
<polygon points="933.27,724.97 940.68,732.05 940.68,739.55 933.27,732.47" fill="#1f4058" stroke="#071722" stroke-width="0.3" stroke-linejoin="round" />
<polygon points="943.85,735.09 951.26,742.18 951.26,749.68 943.85,742.59" fill="#1f4058" stroke="#071722" stroke-width="0.3" stroke-linejoin="round" />
<polygon points="954.44,745.22 961.85,752.3 961.85,759.8 954.44,752.72" fill="#1f4058" stroke="#071722" stroke-width="0.3" stroke-linejoin="round" />
<polygon points="965.02,755.34 972.43,762.43 972.43,769.93 965.02,762.84" fill="#1f4058" stroke="#071722" stroke-width="0.3" stroke-linejoin="round" />
<polygon points="975.6,765.47 983.01,772.55 983.01,780.05 975.6,772.97" fill="#1f4058" stroke="#071722" stroke-width="0.3" stroke-linejoin="round" />
<polygon points="986.19,775.59 993.6,782.68 993.6,790.18 986.19,783.09" fill="#1f4058" stroke="#071722" stroke-width="0.3" stroke-linejoin="round" />
<path d="M463.75 508 L472.5 503.75 L576.25 460.5 L585 460.5 L695 576.25 L697 583.75 L690 590 L576.25 643.75 L565 645 L557.5 640 L463.75 516.25ZM497.5 513.75 L551.25 485.5 L627.5 566.25 L570 587 L563.75 579.5 L553.75 583ZM566.25 486.25 L588.75 477.5 L640 530 L616.25 540ZM621.25 547.5 L643.75 538.75 L650 547.5 L628.75 557.5ZM636.25 565 L658.75 555 L677.5 576.25 L656.25 588.75ZM562.5 596.25 L627.5 568.75 L647.5 592.5 L582.5 622.5Z" fill="#000" opacity="0.32" fill-rule="evenodd" filter="url(#b3)" transform="translate(8,10)"/>
<path d="M463.75 508 L472.5 503.75 L576.25 460.5 L585 460.5 L695 576.25 L697 583.75 L690 590 L576.25 643.75 L565 645 L557.5 640 L463.75 516.25ZM497.5 513.75 L551.25 485.5 L627.5 566.25 L570 587 L563.75 579.5 L553.75 583ZM566.25 486.25 L588.75 477.5 L640 530 L616.25 540ZM621.25 547.5 L643.75 538.75 L650 547.5 L628.75 557.5ZM636.25 565 L658.75 555 L677.5 576.25 L656.25 588.75ZM562.5 596.25 L627.5 568.75 L647.5 592.5 L582.5 622.5Z" fill="#3a7196" fill-rule="evenodd" stroke="#071722" stroke-width="0.6" transform="translate(0,2.2)"/>
<path d="M463.75 508 L472.5 503.75 L576.25 460.5 L585 460.5 L695 576.25 L697 583.75 L690 590 L576.25 643.75 L565 645 L557.5 640 L463.75 516.25ZM497.5 513.75 L551.25 485.5 L627.5 566.25 L570 587 L563.75 579.5 L553.75 583ZM566.25 486.25 L588.75 477.5 L640 530 L616.25 540ZM621.25 547.5 L643.75 538.75 L650 547.5 L628.75 557.5ZM636.25 565 L658.75 555 L677.5 576.25 L656.25 588.75ZM562.5 596.25 L627.5 568.75 L647.5 592.5 L582.5 622.5Z" fill="#62c4fc" fill-rule="evenodd" stroke="#071722" stroke-width="1.0" stroke-linejoin="round"/>
<polygon points="497.5,513.75 551.25,485.5 551.25,487.7 497.5,515.95" fill="#3a7196" stroke="#071722" stroke-width="0.3" stroke-linejoin="round" />
<polygon points="551.25,485.5 627.5,566.25 627.5,568.45 551.25,487.7" fill="#3a7196" stroke="#071722" stroke-width="0.3" stroke-linejoin="round" />
<polygon points="553.75,583 497.5,513.75 497.5,515.95 553.75,585.2" fill="#3a7196" stroke="#071722" stroke-width="0.3" stroke-linejoin="round" />
<polygon points="566.25,486.25 588.75,477.5 588.75,479.7 566.25,488.45" fill="#3a7196" stroke="#071722" stroke-width="0.3" stroke-linejoin="round" />
<polygon points="588.75,477.5 640,530 640,532.2 588.75,479.7" fill="#3a7196" stroke="#071722" stroke-width="0.3" stroke-linejoin="round" />
<polygon points="621.25,547.5 643.75,538.75 643.75,540.95 621.25,549.7" fill="#3a7196" stroke="#071722" stroke-width="0.3" stroke-linejoin="round" />
<polygon points="643.75,538.75 650,547.5 650,549.7 643.75,540.95" fill="#3a7196" stroke="#071722" stroke-width="0.3" stroke-linejoin="round" />
<polygon points="636.25,565 658.75,555 658.75,557.2 636.25,567.2" fill="#3a7196" stroke="#071722" stroke-width="0.3" stroke-linejoin="round" />
<polygon points="658.75,555 677.5,576.25 677.5,578.45 658.75,557.2" fill="#3a7196" stroke="#071722" stroke-width="0.3" stroke-linejoin="round" />
<polygon points="562.5,596.25 627.5,568.75 627.5,570.95 562.5,598.45" fill="#3a7196" stroke="#071722" stroke-width="0.3" stroke-linejoin="round" />
<polygon points="627.5,568.75 647.5,592.5 647.5,594.7 627.5,570.95" fill="#3a7196" stroke="#071722" stroke-width="0.3" stroke-linejoin="round" />
<polyline points="483.75,505 580,464.5 690.75,580 577,630 483.75,505" fill="none" stroke="#2d6d96" stroke-width="0.6" />
<polyline points="463.75,508 483.75,505" fill="none" stroke="#2d6d96" stroke-width="0.5" />
<polyline points="565,645 577,630" fill="none" stroke="#2d6d96" stroke-width="0.5" />
<polyline points="697,583 690.75,580" fill="none" stroke="#2d6d96" stroke-width="0.5" />
<polyline points="581.25,460.5 580,464.5" fill="none" stroke="#2d6d96" stroke-width="0.5" />
<polygon points="500,498.75 548.75,478.75 550,482.5 502.5,502.5" fill="#2a4f68" stroke="#071722" stroke-width="0.3" stroke-linejoin="round" />
<polygon points="556.25,475 570,470 571.25,475 558.75,480" fill="#2a4f68" stroke="#071722" stroke-width="0.3" stroke-linejoin="round" />
<path d="M627.23 737.87Q615.11 722.34 632.83 713.73L749.72 656.96Q764.74 649.66 776.11 661.89L931.66 829.10Q946.44 844.99 927.56 855.68L796.81 929.69Q783.06 937.47 773.34 925.02Z" fill="#000" opacity="0.36" filter="url(#b4)" transform="translate(6,10)"/>
<path d="M627.23 737.87Q615.11 722.34 632.83 713.73L749.72 656.96Q764.74 649.66 776.11 661.89L931.66 829.10Q946.44 844.99 927.56 855.68L796.81 929.69Q783.06 937.47 773.34 925.02Z" fill="#2b5b7c" stroke="#071722" stroke-width="0.9" stroke-linejoin="round" transform="translate(0,3.6)"/>
<path d="M627.23 737.87Q615.11 722.34 632.83 713.73L749.72 656.96Q764.74 649.66 776.11 661.89L931.66 829.10Q946.44 844.99 927.56 855.68L796.81 929.69Q783.06 937.47 773.34 925.02Z" fill="#62c4fc" stroke="#071722" stroke-width="1.1" stroke-linejoin="round"/>
<polygon points="637.5,716.25 758.75,659.5 760,662 640.5,718" fill="#3a7196" stroke="#071722" stroke-width="0.5" stroke-linejoin="round" />
<polyline points="637.5,716.25 758.75,659.5 932.5,843 795,918.75 637.5,716.25" fill="none" stroke="#071722" stroke-width="0.8" />
<polyline points="758.75,659.5 932.5,843" fill="none" stroke="#071722" stroke-width="1.7" />
<ellipse cx="657.5" cy="718" rx="1.9" ry="1.4" fill="#1f4a66" stroke="#071722" stroke-width="0.5"/>
<ellipse cx="755" cy="664.25" rx="1.9" ry="1.4" fill="#1f4a66" stroke="#071722" stroke-width="0.5"/>
<ellipse cx="838.75" cy="748" rx="1.9" ry="1.4" fill="#1f4a66" stroke="#071722" stroke-width="0.5"/>
<ellipse cx="763.75" cy="852.5" rx="1.9" ry="1.4" fill="#1f4a66" stroke="#071722" stroke-width="0.5"/>
<ellipse cx="920.75" cy="844.25" rx="1.9" ry="1.4" fill="#1f4a66" stroke="#071722" stroke-width="0.5"/>
<ellipse cx="807" cy="907.5" rx="1.9" ry="1.4" fill="#1f4a66" stroke="#071722" stroke-width="0.5"/>
<path d="M522.7 741.3 L658.8 949.7 L510.3 1031 L397.9 813Z" fill="#000" opacity="0.33" filter="url(#b5)" transform="translate(8,10)"/>
<path d="M522.7 741.3 L658.8 949.7 L510.3 1031 L476.86 966.14 L486.63 960.71 L482.38 952.6 L472.66 958 L397.9 813Z" fill="#3a7196" stroke="#071722" stroke-width="0.7" transform="translate(0,2.5)"/>
<path d="M522.7 741.3 L658.8 949.7 L510.3 1031 L476.86 966.14 L486.63 960.71 L482.38 952.6 L472.66 958 L397.9 813Z" fill="#62c4fc" stroke="#071722" stroke-width="0.7"/>
<polygon points="487.14,763.1 576.82,910.16 576.82,913.66 492.06,960.72 412.2,809.61 412.2,806.11" fill="#3a7196" stroke="#071722" stroke-width="0.7" stroke-linejoin="round" />
<polygon points="487.14,763.1 576.82,910.16 492.06,957.22 412.2,806.11" fill="#62c4fc" stroke="#071722" stroke-width="0.7" stroke-linejoin="round" />
<polygon points="578.21,913.94 611.54,968.61 611.54,970.61 510.52,1025.97 481.38,969.67 481.38,967.67" fill="#3a7196" stroke="#071722" stroke-width="0.7" stroke-linejoin="round" />
<polygon points="578.21,913.94 611.54,968.61 510.52,1023.97 481.38,967.67" fill="#62c4fc" stroke="#071722" stroke-width="0.7" stroke-linejoin="round" />
<polygon points="528.91,754.19 598.95,861.93 598.95,863.93 566.79,881.9 499.6,772.98 499.6,770.98" fill="#3a7196" stroke="#071722" stroke-width="0.7" stroke-linejoin="round" />
<polygon points="528.91,754.19 598.95,861.93 566.79,879.9 499.6,770.98" fill="#62c4fc" stroke="#071722" stroke-width="0.7" stroke-linejoin="round" />
<polygon points="600.36,864.09 621.25,896.22 621.25,898.22 588.17,916.56 568.14,884.08 568.14,882.08" fill="#3a7196" stroke="#071722" stroke-width="0.7" stroke-linejoin="round" />
<polygon points="600.36,864.09 621.25,896.22 588.17,914.56 568.14,882.08" fill="#62c4fc" stroke="#071722" stroke-width="0.7" stroke-linejoin="round" />
<polygon points="622.73,898.5 653.4,945.68 653.4,947.68 618.99,966.53 589.58,918.86 589.58,916.86" fill="#3a7196" stroke="#071722" stroke-width="0.7" stroke-linejoin="round" />
<polygon points="622.73,898.5 653.4,945.68 618.99,964.53 589.58,916.86" fill="#62c4fc" stroke="#071722" stroke-width="0.7" stroke-linejoin="round" />
<polygon points="505.26,749.15 510.68,757.73 512.33,765.69 497.06,774.44 490.36,763.53 493.29,756.03" fill="#3a7196" stroke="#071722" stroke-width="0.85" stroke-linejoin="round" />
<polygon points="505.26,749.15 510.68,757.73 498.6,764.65 493.29,756.03" fill="#62c4fc" stroke="#071722" stroke-width="0.75" stroke-linejoin="round" />
<polyline points="498.6,764.65 497.06,774.44" fill="none" stroke="#071722" stroke-width="0.5" />
<polygon points="528.76,751.88 538.21,766.45 540.75,775.86 527.78,783.25 516.03,764.71 518.66,757.66" fill="#3a7196" stroke="#071722" stroke-width="0.85" stroke-linejoin="round" />
<polygon points="528.76,751.88 538.21,766.45 527.97,772.29 518.66,757.66" fill="#62c4fc" stroke="#071722" stroke-width="0.75" stroke-linejoin="round" />
<polyline points="527.97,772.29 527.78,783.25" fill="none" stroke="#071722" stroke-width="0.5" />
<polygon points="486.56,760.28 490.76,767.2 492.09,774.8 478.6,782.53 473.38,773.74 475.95,766.37" fill="#3a7196" stroke="#071722" stroke-width="0.85" stroke-linejoin="round" />
<polygon points="486.56,760.28 490.76,767.2 480.09,773.32 475.95,766.37" fill="#62c4fc" stroke="#071722" stroke-width="0.75" stroke-linejoin="round" />
<polyline points="480.09,773.32 478.6,782.53" fill="none" stroke="#071722" stroke-width="0.5" />
<polygon points="515.33,759.56 524.6,774.21 527.1,783.64 514.17,791.01 502.64,772.38 505.25,765.33" fill="#3a7196" stroke="#071722" stroke-width="0.85" stroke-linejoin="round" />
<polygon points="515.33,759.56 524.6,774.21 514.39,780.04 505.25,765.33" fill="#62c4fc" stroke="#071722" stroke-width="0.75" stroke-linejoin="round" />
<polyline points="514.39,780.04 514.17,791.01" fill="none" stroke="#071722" stroke-width="0.5" />
<polygon points="472.47,768.37 476.58,775.33 477.89,782.94 464.43,790.64 459.33,781.81 461.89,774.44" fill="#3a7196" stroke="#071722" stroke-width="0.85" stroke-linejoin="round" />
<polygon points="472.47,768.37 476.58,775.33 465.94,781.42 461.89,774.44" fill="#62c4fc" stroke="#071722" stroke-width="0.75" stroke-linejoin="round" />
<polyline points="465.94,781.42 464.43,790.64" fill="none" stroke="#071722" stroke-width="0.5" />
<polygon points="492.16,769.5 496.43,776.52 497.77,784.15 484.16,791.92 478.87,783 481.46,775.62" fill="#3a7196" stroke="#071722" stroke-width="0.85" stroke-linejoin="round" />
<polygon points="492.16,769.5 496.43,776.52 485.67,782.67 481.46,775.62" fill="#62c4fc" stroke="#071722" stroke-width="0.75" stroke-linejoin="round" />
<polyline points="485.67,782.67 484.16,791.92" fill="none" stroke="#071722" stroke-width="0.5" />
<polygon points="541.36,771.32 551.12,786.38 553.74,795.9 540.54,803.39 528.41,784.24 531.08,777.18" fill="#3a7196" stroke="#071722" stroke-width="0.85" stroke-linejoin="round" />
<polygon points="541.36,771.32 551.12,786.38 540.7,792.3 531.08,777.18" fill="#62c4fc" stroke="#071722" stroke-width="0.75" stroke-linejoin="round" />
<polyline points="540.7,792.3 540.54,803.39" fill="none" stroke="#071722" stroke-width="0.5" />
<polygon points="458.41,776.44 462.44,783.43 463.72,791.05 450.31,798.73 445.31,789.85 447.86,782.49" fill="#3a7196" stroke="#071722" stroke-width="0.85" stroke-linejoin="round" />
<polygon points="458.41,776.44 462.44,783.43 451.83,789.51 447.86,782.49" fill="#62c4fc" stroke="#071722" stroke-width="0.75" stroke-linejoin="round" />
<polyline points="451.83,789.51 450.31,798.73" fill="none" stroke="#071722" stroke-width="0.5" />
<polygon points="477.95,777.63 482.13,784.7 483.45,792.33 469.88,800.08 464.7,791.11 467.28,783.74" fill="#3a7196" stroke="#071722" stroke-width="0.85" stroke-linejoin="round" />
<polygon points="477.95,777.63 482.13,784.7 471.4,790.83 467.28,783.74" fill="#62c4fc" stroke="#071722" stroke-width="0.75" stroke-linejoin="round" />
<polyline points="471.4,790.83 469.88,800.08" fill="none" stroke="#071722" stroke-width="0.5" />
<polygon points="497.84,778.85 502.18,785.99 503.54,793.63 489.82,801.45 484.45,792.39 487.06,785.01" fill="#3a7196" stroke="#071722" stroke-width="0.85" stroke-linejoin="round" />
<polygon points="497.84,778.85 502.18,785.99 491.33,792.17 487.06,785.01" fill="#62c4fc" stroke="#071722" stroke-width="0.75" stroke-linejoin="round" />
<polyline points="491.33,792.17 489.82,801.45" fill="none" stroke="#071722" stroke-width="0.5" />
<polygon points="527.7,779.11 537.27,794.24 539.85,803.78 526.69,811.25 514.78,792 517.44,784.96" fill="#3a7196" stroke="#071722" stroke-width="0.85" stroke-linejoin="round" />
<polygon points="527.7,779.11 537.27,794.24 526.88,800.15 517.44,784.96" fill="#62c4fc" stroke="#071722" stroke-width="0.75" stroke-linejoin="round" />
<polyline points="526.88,800.15 526.69,811.25" fill="none" stroke="#071722" stroke-width="0.5" />
<polygon points="444.39,784.48 448.34,791.51 449.6,799.13 436.22,806.8 431.33,797.87 433.87,790.52" fill="#3a7196" stroke="#071722" stroke-width="0.85" stroke-linejoin="round" />
<polygon points="444.39,784.48 448.34,791.51 437.75,797.57 433.87,790.52" fill="#62c4fc" stroke="#071722" stroke-width="0.75" stroke-linejoin="round" />
<polyline points="437.75,797.57 436.22,806.8" fill="none" stroke="#071722" stroke-width="0.5" />
<polygon points="463.78,785.75 467.87,792.85 469.17,800.49 455.64,808.22 450.57,799.2 453.14,791.84" fill="#3a7196" stroke="#071722" stroke-width="0.85" stroke-linejoin="round" />
<polygon points="463.78,785.75 467.87,792.85 457.17,798.96 453.14,791.84" fill="#62c4fc" stroke="#071722" stroke-width="0.75" stroke-linejoin="round" />
<polyline points="457.17,798.96 455.64,808.22" fill="none" stroke="#071722" stroke-width="0.5" />
<polygon points="483.52,787.04 487.76,794.21 489.1,801.87 475.42,809.67 470.16,800.56 472.76,793.18" fill="#3a7196" stroke="#071722" stroke-width="0.85" stroke-linejoin="round" />
<polygon points="483.52,787.04 487.76,794.21 476.94,800.38 472.76,793.18" fill="#62c4fc" stroke="#071722" stroke-width="0.75" stroke-linejoin="round" />
<polyline points="476.94,800.38 475.42,809.67" fill="none" stroke="#071722" stroke-width="0.5" />
<polygon points="503.61,788.35 508.01,795.6 509.39,803.27 495.56,811.14 490.1,801.93 492.74,794.55" fill="#3a7196" stroke="#071722" stroke-width="0.85" stroke-linejoin="round" />
<polygon points="503.61,788.35 508.01,795.6 497.07,801.82 492.74,794.55" fill="#62c4fc" stroke="#071722" stroke-width="0.75" stroke-linejoin="round" />
<polyline points="497.07,801.82 495.56,811.14" fill="none" stroke="#071722" stroke-width="0.5" />
<polygon points="430.41,792.5 434.27,799.56 435.51,807.2 422.17,814.84 417.39,805.87 419.92,798.52" fill="#3a7196" stroke="#071722" stroke-width="0.85" stroke-linejoin="round" />
<polygon points="430.41,792.5 434.27,799.56 423.72,805.61 419.92,798.52" fill="#62c4fc" stroke="#071722" stroke-width="0.75" stroke-linejoin="round" />
<polyline points="423.72,805.61 422.17,814.84" fill="none" stroke="#071722" stroke-width="0.5" />
<polygon points="449.65,793.84 453.65,800.97 454.93,808.62 441.44,816.33 436.48,807.27 439.04,799.91" fill="#3a7196" stroke="#071722" stroke-width="0.85" stroke-linejoin="round" />
<polygon points="449.65,793.84 453.65,800.97 442.98,807.07 439.04,799.91" fill="#62c4fc" stroke="#071722" stroke-width="0.75" stroke-linejoin="round" />
<polyline points="442.98,807.07 441.44,816.33" fill="none" stroke="#071722" stroke-width="0.5" />
<polygon points="554.38,791.42 564.46,806.98 567.17,816.61 553.73,824.2 541.19,804.41 543.91,797.35" fill="#3a7196" stroke="#071722" stroke-width="0.85" stroke-linejoin="round" />
<polygon points="554.38,791.42 564.46,806.98 553.85,812.97 543.91,797.35" fill="#62c4fc" stroke="#071722" stroke-width="0.75" stroke-linejoin="round" />
<polyline points="553.85,812.97 553.73,824.2" fill="none" stroke="#071722" stroke-width="0.5" />
<polygon points="469.23,795.2 473.38,802.41 474.7,810.08 461.06,817.85 455.91,808.7 458.51,801.33" fill="#3a7196" stroke="#071722" stroke-width="0.85" stroke-linejoin="round" />
<polygon points="469.23,795.2 473.38,802.41 462.59,808.56 458.51,801.33" fill="#62c4fc" stroke="#071722" stroke-width="0.75" stroke-linejoin="round" />
<polyline points="462.59,808.56 461.06,817.85" fill="none" stroke="#071722" stroke-width="0.5" />
<polygon points="489.17,796.59 493.48,803.87 494.84,811.55 481.04,819.4 475.7,810.15 478.33,802.77" fill="#3a7196" stroke="#071722" stroke-width="0.85" stroke-linejoin="round" />
<polygon points="489.17,796.59 493.48,803.87 482.57,810.08 478.33,802.77" fill="#62c4fc" stroke="#071722" stroke-width="0.75" stroke-linejoin="round" />
<polyline points="482.57,810.08 481.04,819.4" fill="none" stroke="#071722" stroke-width="0.5" />
<polygon points="509.47,798 513.95,805.36 515.34,813.06 501.4,820.97 495.85,811.63 498.51,804.24" fill="#3a7196" stroke="#071722" stroke-width="0.85" stroke-linejoin="round" />
<polygon points="509.47,798 513.95,805.36 502.91,811.63 498.51,804.24" fill="#62c4fc" stroke="#071722" stroke-width="0.75" stroke-linejoin="round" />
<polyline points="502.91,811.63 501.4,820.97" fill="none" stroke="#071722" stroke-width="0.5" />
<polygon points="417.22,804.5 421.17,811.93 422.41,819.66 409.89,826.83 404.99,817.39 407.37,810.14" fill="#3a7196" stroke="#071722" stroke-width="0.85" stroke-linejoin="round" />
<polygon points="417.22,804.5 421.17,811.93 411.26,817.6 407.37,810.14" fill="#62c4fc" stroke="#071722" stroke-width="0.75" stroke-linejoin="round" />
<polyline points="411.26,817.6 409.89,826.83" fill="none" stroke="#071722" stroke-width="0.5" />
<polygon points="435.55,801.91 439.47,809.08 440.73,816.74 427.28,824.43 422.42,815.32 424.98,807.96" fill="#3a7196" stroke="#071722" stroke-width="0.85" stroke-linejoin="round" />
<polygon points="435.55,801.91 439.47,809.08 428.83,815.16 424.98,807.96" fill="#62c4fc" stroke="#071722" stroke-width="0.75" stroke-linejoin="round" />
<polyline points="428.83,815.16 427.28,824.43" fill="none" stroke="#071722" stroke-width="0.5" />
<polygon points="540.47,799.31 550.37,814.95 553.03,824.6 539.63,832.16 527.32,812.28 530.03,805.23" fill="#3a7196" stroke="#071722" stroke-width="0.85" stroke-linejoin="round" />
<polygon points="540.47,799.31 550.37,814.95 539.79,820.93 530.03,805.23" fill="#62c4fc" stroke="#071722" stroke-width="0.75" stroke-linejoin="round" />
<polyline points="539.79,820.93 539.63,832.16" fill="none" stroke="#071722" stroke-width="0.5" />
<polygon points="454.98,803.34 459.05,810.59 460.34,818.26 446.74,826.02 441.7,816.82 444.29,809.45" fill="#3a7196" stroke="#071722" stroke-width="0.85" stroke-linejoin="round" />
<polygon points="454.98,803.34 459.05,810.59 448.29,816.72 444.29,809.45" fill="#62c4fc" stroke="#071722" stroke-width="0.75" stroke-linejoin="round" />
<polyline points="448.29,816.72 446.74,826.02" fill="none" stroke="#071722" stroke-width="0.5" />
<polygon points="474.76,804.8 478.98,812.12 480.32,819.81 466.56,827.64 461.33,818.34 463.95,810.96" fill="#3a7196" stroke="#071722" stroke-width="0.85" stroke-linejoin="round" />
<polygon points="474.76,804.8 478.98,812.12 468.1,818.31 463.95,810.96" fill="#62c4fc" stroke="#071722" stroke-width="0.75" stroke-linejoin="round" />
<polyline points="468.1,818.31 466.56,827.64" fill="none" stroke="#071722" stroke-width="0.5" />
<polygon points="494.91,806.29 499.29,813.68 500.66,821.39 486.75,829.29 481.33,819.89 483.98,812.51" fill="#3a7196" stroke="#071722" stroke-width="0.85" stroke-linejoin="round" />
<polygon points="494.91,806.29 499.29,813.68 488.29,819.93 483.98,812.51" fill="#62c4fc" stroke="#071722" stroke-width="0.75" stroke-linejoin="round" />
<polyline points="488.29,819.93 486.75,829.29" fill="none" stroke="#071722" stroke-width="0.5" />
<polygon points="515.43,807.8 519.97,815.28 521.39,823 507.32,830.97 501.69,821.47 504.37,814.08" fill="#3a7196" stroke="#071722" stroke-width="0.85" stroke-linejoin="round" />
<polygon points="515.43,807.8 519.97,815.28 508.84,821.58 504.37,814.08" fill="#62c4fc" stroke="#071722" stroke-width="0.75" stroke-linejoin="round" />
<polyline points="508.84,821.58 507.32,830.97" fill="none" stroke="#071722" stroke-width="0.5" />
<polygon points="422.22,813.89 426.23,821.44 427.49,829.2 414.86,836.41 409.89,826.83 412.29,819.57" fill="#3a7196" stroke="#071722" stroke-width="0.85" stroke-linejoin="round" />
<polygon points="422.22,813.89 426.23,821.44 416.24,827.14 412.29,819.57" fill="#62c4fc" stroke="#071722" stroke-width="0.75" stroke-linejoin="round" />
<polyline points="416.24,827.14 414.86,836.41" fill="none" stroke="#071722" stroke-width="0.5" />
<polygon points="440.77,811.46 444.75,818.74 446.03,826.43 432.46,834.16 427.53,824.91 430.11,817.55" fill="#3a7196" stroke="#071722" stroke-width="0.85" stroke-linejoin="round" />
<polygon points="440.77,811.46 444.75,818.74 434.02,824.86 430.11,817.55" fill="#62c4fc" stroke="#071722" stroke-width="0.75" stroke-linejoin="round" />
<polyline points="434.02,824.86 432.46,834.16" fill="none" stroke="#071722" stroke-width="0.5" />
<polygon points="460.4,812.99 464.53,820.35 465.84,828.05 452.13,835.85 447.01,826.51 449.62,819.14" fill="#3a7196" stroke="#071722" stroke-width="0.85" stroke-linejoin="round" />
<polygon points="460.4,812.99 464.53,820.35 453.68,826.52 449.62,819.14" fill="#62c4fc" stroke="#071722" stroke-width="0.75" stroke-linejoin="round" />
<polyline points="453.68,826.52 452.13,835.85" fill="none" stroke="#071722" stroke-width="0.5" />
<polygon points="480.38,814.55 484.67,821.99 486.02,829.7 472.15,837.58 466.84,828.13 469.48,820.75" fill="#3a7196" stroke="#071722" stroke-width="0.85" stroke-linejoin="round" />
<polygon points="480.38,814.55 484.67,821.99 473.7,828.22 469.48,820.75" fill="#62c4fc" stroke="#071722" stroke-width="0.75" stroke-linejoin="round" />
<polyline points="473.7,828.22 472.15,837.58" fill="none" stroke="#071722" stroke-width="0.5" />
<polygon points="567.84,812.19 578.26,828.28 581.05,838.03 567.37,845.72 554.4,825.26 557.18,818.2" fill="#3a7196" stroke="#071722" stroke-width="0.85" stroke-linejoin="round" />
<polygon points="567.84,812.19 578.26,828.28 567.46,834.35 557.18,818.2" fill="#62c4fc" stroke="#071722" stroke-width="0.75" stroke-linejoin="round" />
<polyline points="567.46,834.35 567.37,845.72" fill="none" stroke="#071722" stroke-width="0.5" />
<polygon points="500.74,816.14 505.19,823.65 506.58,831.39 492.56,839.33 487.04,829.79 489.71,822.4" fill="#3a7196" stroke="#071722" stroke-width="0.85" stroke-linejoin="round" />
<polygon points="500.74,816.14 505.19,823.65 494.09,829.94 489.71,822.4" fill="#62c4fc" stroke="#071722" stroke-width="0.75" stroke-linejoin="round" />
<polyline points="494.09,829.94 492.56,839.33" fill="none" stroke="#071722" stroke-width="0.5" />
<polygon points="521.48,817.76 526.09,825.35 527.53,833.1 513.34,841.12 507.62,831.47 510.33,824.07" fill="#3a7196" stroke="#071722" stroke-width="0.85" stroke-linejoin="round" />
<polygon points="521.48,817.76 526.09,825.35 514.87,831.7 510.33,824.07" fill="#62c4fc" stroke="#071722" stroke-width="0.75" stroke-linejoin="round" />
<polyline points="514.87,831.7 513.34,841.12" fill="none" stroke="#071722" stroke-width="0.5" />
<polygon points="446.07,821.16 450.11,828.55 451.4,836.26 437.73,844.05 432.72,834.65 435.32,827.29" fill="#3a7196" stroke="#071722" stroke-width="0.85" stroke-linejoin="round" />
<polygon points="446.07,821.16 450.11,828.55 439.29,834.71 435.32,827.29" fill="#62c4fc" stroke="#071722" stroke-width="0.75" stroke-linejoin="round" />
<polyline points="439.29,834.71 437.73,844.05" fill="none" stroke="#071722" stroke-width="0.5" />
<polygon points="465.9,822.79 470.09,830.26 471.42,837.99 457.59,845.84 452.4,836.35 455.03,828.97" fill="#3a7196" stroke="#071722" stroke-width="0.85" stroke-linejoin="round" />
<polygon points="465.9,822.79 470.09,830.26 459.15,836.48 455.03,828.97" fill="#62c4fc" stroke="#071722" stroke-width="0.75" stroke-linejoin="round" />
<polyline points="459.15,836.48 457.59,845.84" fill="none" stroke="#071722" stroke-width="0.5" />
<polygon points="553.68,820.18 563.91,836.35 566.65,846.13 553.01,853.79 540.29,833.23 543.05,826.18" fill="#3a7196" stroke="#071722" stroke-width="0.85" stroke-linejoin="round" />
<polygon points="553.68,820.18 563.91,836.35 553.13,842.41 543.05,826.18" fill="#62c4fc" stroke="#071722" stroke-width="0.75" stroke-linejoin="round" />
<polyline points="553.13,842.41 553.01,853.79" fill="none" stroke="#071722" stroke-width="0.5" />
<polygon points="486.09,824.45 490.45,832.01 491.82,839.75 477.83,847.67 472.44,838.08 475.1,830.69" fill="#3a7196" stroke="#071722" stroke-width="0.85" stroke-linejoin="round" />
<polygon points="486.09,824.45 490.45,832.01 479.38,838.28 475.1,830.69" fill="#62c4fc" stroke="#071722" stroke-width="0.75" stroke-linejoin="round" />
<polyline points="479.38,838.28 477.83,847.67" fill="none" stroke="#071722" stroke-width="0.5" />
<polygon points="506.66,826.15 511.18,833.78 512.6,841.54 498.45,849.54 492.85,839.84 495.54,832.44" fill="#3a7196" stroke="#071722" stroke-width="0.85" stroke-linejoin="round" />
<polygon points="506.66,826.15 511.18,833.78 499.99,840.11 495.54,832.44" fill="#62c4fc" stroke="#071722" stroke-width="0.75" stroke-linejoin="round" />
<polyline points="499.99,840.11 498.45,849.54" fill="none" stroke="#071722" stroke-width="0.5" />
<polygon points="527.62,827.87 532.31,835.59 533.77,843.37 519.46,851.44 513.65,841.63 516.38,834.23" fill="#3a7196" stroke="#071722" stroke-width="0.85" stroke-linejoin="round" />
<polygon points="527.62,827.87 532.31,835.59 520.99,841.98 516.38,834.23" fill="#62c4fc" stroke="#071722" stroke-width="0.75" stroke-linejoin="round" />
<polyline points="520.99,841.98 519.46,851.44" fill="none" stroke="#071722" stroke-width="0.5" />
<polygon points="451.45,831.01 455.56,838.52 456.87,846.26 443.07,854.09 437.99,844.54 440.61,837.18" fill="#3a7196" stroke="#071722" stroke-width="0.85" stroke-linejoin="round" />
<polygon points="451.45,831.01 455.56,838.52 444.65,844.72 440.61,837.18" fill="#62c4fc" stroke="#071722" stroke-width="0.75" stroke-linejoin="round" />
<polyline points="444.65,844.72 443.07,854.09" fill="none" stroke="#071722" stroke-width="0.5" />
<polygon points="471.49,832.74 475.75,840.34 477.1,848.09 463.15,855.99 457.87,846.35 460.52,838.97" fill="#3a7196" stroke="#071722" stroke-width="0.85" stroke-linejoin="round" />
<polygon points="471.49,832.74 475.75,840.34 464.71,846.59 460.52,838.97" fill="#62c4fc" stroke="#071722" stroke-width="0.75" stroke-linejoin="round" />
<polyline points="464.71,846.59 463.15,855.99" fill="none" stroke="#071722" stroke-width="0.5" />
<polygon points="491.89,834.51 496.32,842.19 497.71,849.96 483.6,857.93 478.12,848.18 480.8,840.79" fill="#3a7196" stroke="#071722" stroke-width="0.85" stroke-linejoin="round" />
<polygon points="491.89,834.51 496.32,842.19 485.16,848.5 480.8,840.79" fill="#62c4fc" stroke="#071722" stroke-width="0.75" stroke-linejoin="round" />
<polyline points="485.16,848.5 483.6,857.93" fill="none" stroke="#071722" stroke-width="0.5" />
<polygon points="512.68,836.31 517.27,844.07 518.71,851.86 504.44,859.91 498.75,850.05 501.47,842.65" fill="#3a7196" stroke="#071722" stroke-width="0.85" stroke-linejoin="round" />
<polygon points="512.68,836.31 517.27,844.07 505.99,850.44 501.47,842.65" fill="#62c4fc" stroke="#071722" stroke-width="0.75" stroke-linejoin="round" />
<polyline points="505.99,850.44 504.44,859.91" fill="none" stroke="#071722" stroke-width="0.5" />
<polygon points="581.75,833.66 592.54,850.32 595.42,860.2 581.48,867.99 568.07,846.82 570.9,839.76" fill="#3a7196" stroke="#071722" stroke-width="0.85" stroke-linejoin="round" />
<polygon points="581.75,833.66 592.54,850.32 581.54,856.47 570.9,839.76" fill="#62c4fc" stroke="#071722" stroke-width="0.75" stroke-linejoin="round" />
<polyline points="581.54,856.47 581.48,867.99" fill="none" stroke="#071722" stroke-width="0.5" />
<polygon points="533.87,838.15 538.63,845.99 540.11,853.8 525.68,861.92 519.77,851.96 522.52,844.55" fill="#3a7196" stroke="#071722" stroke-width="0.85" stroke-linejoin="round" />
<polygon points="533.87,838.15 538.63,845.99 527.22,852.42 522.52,844.55" fill="#62c4fc" stroke="#071722" stroke-width="0.75" stroke-linejoin="round" />
<polyline points="527.22,852.42 525.68,861.92" fill="none" stroke="#071722" stroke-width="0.5" />
<polygon points="456.92,841.01 461.09,848.64 462.42,856.4 448.51,864.28 443.34,854.59 445.99,847.22" fill="#3a7196" stroke="#071722" stroke-width="0.85" stroke-linejoin="round" />
<polygon points="456.92,841.01 461.09,848.64 450.09,854.88 445.99,847.22" fill="#62c4fc" stroke="#071722" stroke-width="0.75" stroke-linejoin="round" />
<polyline points="450.09,854.88 448.51,864.28" fill="none" stroke="#071722" stroke-width="0.5" />
<polygon points="477.16,842.86 481.49,850.57 482.86,858.35 468.79,866.3 463.43,856.5 466.1,849.12" fill="#3a7196" stroke="#071722" stroke-width="0.85" stroke-linejoin="round" />
<polygon points="477.16,842.86 481.49,850.57 470.36,856.86 466.1,849.12" fill="#62c4fc" stroke="#071722" stroke-width="0.75" stroke-linejoin="round" />
<polyline points="470.36,856.86 468.79,866.3" fill="none" stroke="#071722" stroke-width="0.5" />
<polygon points="497.78,844.73 502.28,852.53 503.69,860.33 489.46,868.35 483.89,858.45 486.6,851.05" fill="#3a7196" stroke="#071722" stroke-width="0.85" stroke-linejoin="round" />
<polygon points="497.78,844.73 502.28,852.53 491.02,858.88 486.6,851.05" fill="#62c4fc" stroke="#071722" stroke-width="0.75" stroke-linejoin="round" />
<polyline points="491.02,858.88 489.46,868.35" fill="none" stroke="#071722" stroke-width="0.5" />
<polygon points="567.33,841.76 577.92,858.5 580.75,868.4 566.85,876.17 553.69,854.89 556.51,847.84" fill="#3a7196" stroke="#071722" stroke-width="0.85" stroke-linejoin="round" />
<polygon points="567.33,841.76 577.92,858.5 566.94,864.64 556.51,847.84" fill="#62c4fc" stroke="#071722" stroke-width="0.75" stroke-linejoin="round" />
<polyline points="566.94,864.64 566.85,876.17" fill="none" stroke="#071722" stroke-width="0.5" />
<polygon points="518.8,846.65 523.46,854.53 524.92,862.35 510.53,870.44 504.74,860.43 507.49,853.02" fill="#3a7196" stroke="#071722" stroke-width="0.85" stroke-linejoin="round" />
<polygon points="518.8,846.65 523.46,854.53 512.08,860.94 507.49,853.02" fill="#62c4fc" stroke="#071722" stroke-width="0.75" stroke-linejoin="round" />
<polyline points="512.08,860.94 510.53,870.44" fill="none" stroke="#071722" stroke-width="0.5" />
<polygon points="540.22,848.6 545.06,856.57 546.56,864.4 532,872.57 525.99,862.45 528.77,855.03" fill="#3a7196" stroke="#071722" stroke-width="0.85" stroke-linejoin="round" />
<polygon points="540.22,848.6 545.06,856.57 533.54,863.04 528.77,855.03" fill="#62c4fc" stroke="#071722" stroke-width="0.75" stroke-linejoin="round" />
<polyline points="533.54,863.04 532,872.57" fill="none" stroke="#071722" stroke-width="0.5" />
<polygon points="462.47,851.17 466.71,858.93 468.05,866.72 454.03,874.64 448.78,864.8 451.45,857.42" fill="#3a7196" stroke="#071722" stroke-width="0.85" stroke-linejoin="round" />
<polygon points="462.47,851.17 466.71,858.93 455.61,865.2 451.45,857.42" fill="#62c4fc" stroke="#071722" stroke-width="0.75" stroke-linejoin="round" />
<polyline points="455.61,865.2 454.03,874.64" fill="none" stroke="#071722" stroke-width="0.5" />
<polygon points="482.93,853.13 487.33,860.97 488.71,868.77 474.53,876.77 469.08,866.82 471.78,859.43" fill="#3a7196" stroke="#071722" stroke-width="0.85" stroke-linejoin="round" />
<polygon points="482.93,853.13 487.33,860.97 476.1,867.3 471.78,859.43" fill="#62c4fc" stroke="#071722" stroke-width="0.75" stroke-linejoin="round" />
<polyline points="476.1,867.3 474.53,876.77" fill="none" stroke="#071722" stroke-width="0.5" />
<polygon points="503.77,855.12 508.34,863.04 509.77,870.87 495.42,878.94 489.76,868.88 492.49,861.48" fill="#3a7196" stroke="#071722" stroke-width="0.85" stroke-linejoin="round" />
<polygon points="503.77,855.12 508.34,863.04 496.99,869.43 492.49,861.48" fill="#62c4fc" stroke="#071722" stroke-width="0.75" stroke-linejoin="round" />
<polyline points="496.99,869.43 495.42,878.94" fill="none" stroke="#071722" stroke-width="0.5" />
<polygon points="525.01,857.15 529.76,865.16 531.23,873 516.71,881.15 510.83,870.97 513.6,863.56" fill="#3a7196" stroke="#071722" stroke-width="0.85" stroke-linejoin="round" />
<polygon points="525.01,857.15 529.76,865.16 518.27,871.61 513.6,863.56" fill="#62c4fc" stroke="#071722" stroke-width="0.75" stroke-linejoin="round" />
<polyline points="518.27,871.61 516.71,881.15" fill="none" stroke="#071722" stroke-width="0.5" />
<polygon points="546.67,859.22 551.59,867.32 553.11,875.18 538.42,883.41 532.32,873.11 535.12,865.69" fill="#3a7196" stroke="#071722" stroke-width="0.85" stroke-linejoin="round" />
<polygon points="546.67,859.22 551.59,867.32 539.97,873.83 535.12,865.69" fill="#62c4fc" stroke="#071722" stroke-width="0.75" stroke-linejoin="round" />
<polyline points="539.97,873.83 538.42,883.41" fill="none" stroke="#071722" stroke-width="0.5" />
<polygon points="468.11,861.5 472.42,869.38 473.78,877.19 459.63,885.17 454.31,875.16 456.99,867.78" fill="#3a7196" stroke="#071722" stroke-width="0.85" stroke-linejoin="round" />
<polygon points="468.11,861.5 472.42,869.38 461.23,875.69 456.99,867.78" fill="#62c4fc" stroke="#071722" stroke-width="0.75" stroke-linejoin="round" />
<polyline points="461.23,875.69 459.63,885.17" fill="none" stroke="#071722" stroke-width="0.5" />
<polygon points="600.06,861.92 606.74,872.23 608.65,880.61 594.48,888.5 586.19,875.41 588.95,868.13" fill="#3a7196" stroke="#071722" stroke-width="0.85" stroke-linejoin="round" />
<polygon points="600.06,861.92 606.74,872.23 595.53,878.47 588.95,868.13" fill="#62c4fc" stroke="#071722" stroke-width="0.75" stroke-linejoin="round" />
<polyline points="595.53,878.47 594.48,888.5" fill="none" stroke="#071722" stroke-width="0.5" />
<polygon points="424.56,828.93 463.93,903.55 473.89,928.01 464.34,933.36 414.73,837.73 417.55,832.93" fill="#3a7196" stroke="#071722" stroke-width="0.85" stroke-linejoin="round" />
<polygon points="424.56,828.93 463.93,903.55 456.48,907.74 417.55,832.93" fill="#62c4fc" stroke="#071722" stroke-width="0.75" stroke-linejoin="round" />
<polyline points="456.48,907.74 464.34,933.36" fill="none" stroke="#071722" stroke-width="0.5" />
<polygon points="488.79,863.57 493.26,871.53 494.66,879.36 480.35,887.41 474.82,877.3 477.54,869.91" fill="#3a7196" stroke="#071722" stroke-width="0.85" stroke-linejoin="round" />
<polygon points="488.79,863.57 493.26,871.53 481.94,877.9 477.54,869.91" fill="#62c4fc" stroke="#071722" stroke-width="0.75" stroke-linejoin="round" />
<polyline points="481.94,877.9 480.35,887.41" fill="none" stroke="#071722" stroke-width="0.5" />
<polygon points="509.85,865.67 514.5,873.73 515.95,881.58 501.47,889.7 495.72,879.47 498.48,872.07" fill="#3a7196" stroke="#071722" stroke-width="0.85" stroke-linejoin="round" />
<polygon points="509.85,865.67 514.5,873.73 503.05,880.15 498.48,872.07" fill="#62c4fc" stroke="#071722" stroke-width="0.75" stroke-linejoin="round" />
<polyline points="503.05,880.15 501.47,889.7" fill="none" stroke="#071722" stroke-width="0.5" />
<polygon points="531.33,867.82 536.15,875.97 537.65,883.84 523,892.04 517.02,881.69 519.82,874.28" fill="#3a7196" stroke="#071722" stroke-width="0.85" stroke-linejoin="round" />
<polygon points="531.33,867.82 536.15,875.97 524.56,882.45 519.82,874.28" fill="#62c4fc" stroke="#071722" stroke-width="0.75" stroke-linejoin="round" />
<polyline points="524.56,882.45 523,892.04" fill="none" stroke="#071722" stroke-width="0.5" />
<polygon points="585.3,870.16 591.85,880.52 593.73,888.91 579.6,896.78 571.46,883.63 574.22,876.35" fill="#3a7196" stroke="#071722" stroke-width="0.85" stroke-linejoin="round" />
<polygon points="585.3,870.16 591.85,880.52 580.67,886.74 574.22,876.35" fill="#62c4fc" stroke="#071722" stroke-width="0.75" stroke-linejoin="round" />
<polyline points="580.67,886.74 579.6,896.78" fill="none" stroke="#071722" stroke-width="0.5" />
<polygon points="553.22,870.01 558.23,878.25 559.77,886.14 544.95,894.42 538.74,883.95 541.58,876.53" fill="#3a7196" stroke="#071722" stroke-width="0.85" stroke-linejoin="round" />
<polygon points="553.22,870.01 558.23,878.25 546.5,884.8 541.58,876.53" fill="#62c4fc" stroke="#071722" stroke-width="0.75" stroke-linejoin="round" />
<polyline points="546.5,884.8 544.95,894.42" fill="none" stroke="#071722" stroke-width="0.5" />
<polygon points="473.84,871.99 478.22,879.99 479.6,887.84 465.33,895.86 459.92,885.7 462.63,878.31" fill="#3a7196" stroke="#071722" stroke-width="0.85" stroke-linejoin="round" />
<polygon points="473.84,871.99 478.22,879.99 466.93,886.34 462.63,878.31" fill="#62c4fc" stroke="#071722" stroke-width="0.75" stroke-linejoin="round" />
<polyline points="466.93,886.34 465.33,895.86" fill="none" stroke="#071722" stroke-width="0.5" />
<polygon points="494.74,874.17 499.28,882.27 500.71,890.13 486.28,898.23 480.65,887.95 483.4,880.55" fill="#3a7196" stroke="#071722" stroke-width="0.85" stroke-linejoin="round" />
<polygon points="494.74,874.17 499.28,882.27 487.86,888.68 483.4,880.55" fill="#62c4fc" stroke="#071722" stroke-width="0.75" stroke-linejoin="round" />
<polyline points="487.86,888.68 486.28,898.23" fill="none" stroke="#071722" stroke-width="0.5" />
<polygon points="608.96,875.65 615.77,886.17 617.73,894.61 603.39,902.56 594.92,889.2 597.72,881.9" fill="#3a7196" stroke="#071722" stroke-width="0.85" stroke-linejoin="round" />
<polygon points="608.96,875.65 615.77,886.17 604.44,892.46 597.72,881.9" fill="#62c4fc" stroke="#071722" stroke-width="0.75" stroke-linejoin="round" />
<polyline points="604.44,892.46 603.39,902.56" fill="none" stroke="#071722" stroke-width="0.5" />
<polygon points="516.04,876.4 520.76,884.59 522.23,892.47 507.62,900.64 501.78,890.25 504.56,882.84" fill="#3a7196" stroke="#071722" stroke-width="0.85" stroke-linejoin="round" />
<polygon points="516.04,876.4 520.76,884.59 509.2,891.06 504.56,882.84" fill="#62c4fc" stroke="#071722" stroke-width="0.75" stroke-linejoin="round" />
<polyline points="509.2,891.06 507.62,900.64" fill="none" stroke="#071722" stroke-width="0.5" />
<polygon points="537.75,878.67 542.65,886.95 544.17,894.85 529.39,903.1 523.32,892.59 526.14,885.17" fill="#3a7196" stroke="#071722" stroke-width="0.85" stroke-linejoin="round" />
<polygon points="537.75,878.67 542.65,886.95 530.96,893.48 526.14,885.17" fill="#62c4fc" stroke="#071722" stroke-width="0.75" stroke-linejoin="round" />
<polyline points="530.96,893.48 529.39,903.1" fill="none" stroke="#071722" stroke-width="0.5" />
<polygon points="559.89,880.98 564.98,889.36 566.55,897.28 551.59,905.61 545.28,894.97 548.14,887.54" fill="#3a7196" stroke="#071722" stroke-width="0.85" stroke-linejoin="round" />
<polygon points="559.89,880.98 564.98,889.36 553.15,895.95 548.14,887.54" fill="#62c4fc" stroke="#071722" stroke-width="0.75" stroke-linejoin="round" />
<polyline points="553.15,895.95 551.59,905.61" fill="none" stroke="#071722" stroke-width="0.5" />
<polygon points="479.67,882.65 484.11,890.78 485.52,898.66 471.12,906.73 465.62,896.4 468.36,889.01" fill="#3a7196" stroke="#071722" stroke-width="0.85" stroke-linejoin="round" />
<polygon points="479.67,882.65 484.11,890.78 472.73,897.17 468.36,889.01" fill="#62c4fc" stroke="#071722" stroke-width="0.75" stroke-linejoin="round" />
<polyline points="472.73,897.17 471.12,906.73" fill="none" stroke="#071722" stroke-width="0.5" />
<polygon points="594.02,883.96 600.71,894.53 602.64,902.98 588.34,910.91 580.03,897.48 582.82,890.19" fill="#3a7196" stroke="#071722" stroke-width="0.85" stroke-linejoin="round" />
<polygon points="594.02,883.96 600.71,894.53 589.41,900.8 582.82,890.19" fill="#62c4fc" stroke="#071722" stroke-width="0.75" stroke-linejoin="round" />
<polyline points="589.41,900.8 588.34,910.91" fill="none" stroke="#071722" stroke-width="0.5" />
<polygon points="500.79,884.95 505.41,893.18 506.86,901.07 492.29,909.23 486.57,898.78 489.35,891.37" fill="#3a7196" stroke="#071722" stroke-width="0.85" stroke-linejoin="round" />
<polygon points="500.79,884.95 505.41,893.18 493.89,899.63 489.35,891.37" fill="#62c4fc" stroke="#071722" stroke-width="0.75" stroke-linejoin="round" />
<polyline points="493.89,899.63 492.29,909.23" fill="none" stroke="#071722" stroke-width="0.5" />
<polygon points="522.32,887.3 527.12,895.63 528.62,903.54 513.88,911.77 507.94,901.2 510.75,893.78" fill="#3a7196" stroke="#071722" stroke-width="0.85" stroke-linejoin="round" />
<polygon points="522.32,887.3 527.12,895.63 515.47,902.14 510.75,893.78" fill="#62c4fc" stroke="#071722" stroke-width="0.75" stroke-linejoin="round" />
<polyline points="515.47,902.14 513.88,911.77" fill="none" stroke="#071722" stroke-width="0.5" />
<polygon points="544.28,889.7 549.26,898.12 550.81,906.05 535.89,914.36 529.72,903.66 532.56,896.24" fill="#3a7196" stroke="#071722" stroke-width="0.85" stroke-linejoin="round" />
<polygon points="544.28,889.7 549.26,898.12 537.47,904.69 532.56,896.24" fill="#62c4fc" stroke="#071722" stroke-width="0.75" stroke-linejoin="round" />
<polyline points="537.47,904.69 535.89,914.36" fill="none" stroke="#071722" stroke-width="0.5" />
<polygon points="566.67,892.14 571.85,900.66 573.44,908.62 558.34,917 551.93,906.18 554.81,898.74" fill="#3a7196" stroke="#071722" stroke-width="0.85" stroke-linejoin="round" />
<polygon points="566.67,892.14 571.85,900.66 559.91,907.3 554.81,898.74" fill="#62c4fc" stroke="#071722" stroke-width="0.75" stroke-linejoin="round" />
<polyline points="559.91,907.3 558.34,917" fill="none" stroke="#071722" stroke-width="0.5" />
<polygon points="485.59,893.48 490.11,901.75 491.53,909.65 477.01,917.78 471.42,907.28 474.18,899.88" fill="#3a7196" stroke="#071722" stroke-width="0.85" stroke-linejoin="round" />
<polygon points="485.59,893.48 490.11,901.75 478.62,908.18 474.18,899.88" fill="#62c4fc" stroke="#071722" stroke-width="0.75" stroke-linejoin="round" />
<polyline points="478.62,908.18 477.01,917.78" fill="none" stroke="#071722" stroke-width="0.5" />
<polygon points="621.72,895.36 628.65,906.05 630.64,914.52 616.07,922.56 607.46,908.98 610.3,901.68" fill="#3a7196" stroke="#071722" stroke-width="0.85" stroke-linejoin="round" />
<polygon points="621.72,895.36 628.65,906.05 617.13,912.41 610.3,901.68" fill="#62c4fc" stroke="#071722" stroke-width="0.75" stroke-linejoin="round" />
<polyline points="617.13,912.41 616.07,922.56" fill="none" stroke="#071722" stroke-width="0.5" />
<polygon points="506.94,895.91 511.64,904.28 513.11,912.2 498.41,920.4 492.6,909.78 495.4,902.37" fill="#3a7196" stroke="#071722" stroke-width="0.85" stroke-linejoin="round" />
<polygon points="506.94,895.91 511.64,904.28 500.02,910.77 495.4,902.37" fill="#62c4fc" stroke="#071722" stroke-width="0.75" stroke-linejoin="round" />
<polyline points="500.02,910.77 498.41,920.4" fill="none" stroke="#071722" stroke-width="0.5" />
<polygon points="528.71,898.39 533.59,906.85 535.11,914.79 520.24,923.07 514.2,912.33 517.03,904.91" fill="#3a7196" stroke="#071722" stroke-width="0.85" stroke-linejoin="round" />
<polygon points="528.71,898.39 533.59,906.85 521.83,913.4 517.03,904.91" fill="#62c4fc" stroke="#071722" stroke-width="0.75" stroke-linejoin="round" />
<polyline points="521.83,913.4 520.24,923.07" fill="none" stroke="#071722" stroke-width="0.5" />
<polygon points="550.92,900.91 555.99,909.48 557.55,917.44 542.5,925.8 536.22,914.93 539.1,907.5" fill="#3a7196" stroke="#071722" stroke-width="0.85" stroke-linejoin="round" />
<polygon points="550.92,900.91 555.99,909.48 544.08,916.09 539.1,907.5" fill="#62c4fc" stroke="#071722" stroke-width="0.75" stroke-linejoin="round" />
<polyline points="544.08,916.09 542.5,925.8" fill="none" stroke="#071722" stroke-width="0.5" />
<polygon points="606.55,903.76 613.35,914.5 615.3,922.99 600.77,931.01 592.33,917.36 595.16,910.06" fill="#3a7196" stroke="#071722" stroke-width="0.85" stroke-linejoin="round" />
<polygon points="606.55,903.76 613.35,914.5 601.86,920.85 595.16,910.06" fill="#62c4fc" stroke="#071722" stroke-width="0.75" stroke-linejoin="round" />
<polyline points="601.86,920.85 600.77,931.01" fill="none" stroke="#071722" stroke-width="0.5" />
<polygon points="491.6,904.49 496.2,912.9 497.64,920.83 482.99,929.01 477.31,918.34 480.09,910.94" fill="#3a7196" stroke="#071722" stroke-width="0.85" stroke-linejoin="round" />
<polygon points="491.6,904.49 496.2,912.9 484.61,919.37 480.09,910.94" fill="#62c4fc" stroke="#071722" stroke-width="0.75" stroke-linejoin="round" />
<polyline points="484.61,919.37 482.99,929.01" fill="none" stroke="#071722" stroke-width="0.5" />
<polygon points="513.19,907.05 517.97,915.56 519.46,923.51 504.64,931.77 498.72,920.97 501.55,913.55" fill="#3a7196" stroke="#071722" stroke-width="0.85" stroke-linejoin="round" />
<polygon points="513.19,907.05 517.97,915.56 506.24,922.09 501.55,913.55" fill="#62c4fc" stroke="#071722" stroke-width="0.75" stroke-linejoin="round" />
<polyline points="506.24,922.09 504.64,931.77" fill="none" stroke="#071722" stroke-width="0.5" />
<polygon points="630.95,909.6 638.03,920.53 640.06,929.05 625.32,937.16 616.52,923.29 619.4,915.98" fill="#3a7196" stroke="#071722" stroke-width="0.85" stroke-linejoin="round" />
<polygon points="630.95,909.6 638.03,920.53 626.38,926.94 619.4,915.98" fill="#62c4fc" stroke="#071722" stroke-width="0.75" stroke-linejoin="round" />
<polyline points="626.38,926.94 625.32,937.16" fill="none" stroke="#071722" stroke-width="0.5" />
<polygon points="535.21,909.66 540.17,918.26 541.71,926.24 526.71,934.57 520.56,923.65 523.42,916.22" fill="#3a7196" stroke="#071722" stroke-width="0.85" stroke-linejoin="round" />
<polygon points="535.21,909.66 540.17,918.26 528.31,924.86 523.42,916.22" fill="#62c4fc" stroke="#071722" stroke-width="0.75" stroke-linejoin="round" />
<polyline points="528.31,924.86 526.71,934.57" fill="none" stroke="#071722" stroke-width="0.5" />
<polygon points="574.91,913.43 580.44,922.57 582.1,930.68 567.34,938.85 560.48,927.24 563.32,919.86" fill="#3a7196" stroke="#071722" stroke-width="0.85" stroke-linejoin="round" />
<polygon points="574.91,913.43 580.44,922.57 568.76,929.04 563.32,919.86" fill="#62c4fc" stroke="#071722" stroke-width="0.75" stroke-linejoin="round" />
<polyline points="568.76,929.04 567.34,938.85" fill="none" stroke="#071722" stroke-width="0.5" />
<polygon points="497.72,915.69 502.39,924.24 503.86,932.2 489.08,940.43 483.29,929.58 486.11,922.17" fill="#3a7196" stroke="#071722" stroke-width="0.85" stroke-linejoin="round" />
<polygon points="497.72,915.69 502.39,924.24 490.7,930.75 486.11,922.17" fill="#62c4fc" stroke="#071722" stroke-width="0.75" stroke-linejoin="round" />
<polyline points="490.7,930.75 489.08,940.43" fill="none" stroke="#071722" stroke-width="0.5" />
<polygon points="615.61,918.08 622.55,929.05 624.54,937.59 609.85,945.67 601.22,931.73 604.09,924.43" fill="#3a7196" stroke="#071722" stroke-width="0.85" stroke-linejoin="round" />
<polygon points="615.61,918.08 622.55,929.05 610.93,935.45 604.09,924.43" fill="#62c4fc" stroke="#071722" stroke-width="0.75" stroke-linejoin="round" />
<polyline points="610.93,935.45 609.85,945.67" fill="none" stroke="#071722" stroke-width="0.5" />
<polygon points="519.55,918.38 524.41,927.03 525.92,935.01 510.96,943.32 504.95,932.34 507.8,924.92" fill="#3a7196" stroke="#071722" stroke-width="0.85" stroke-linejoin="round" />
<polygon points="519.55,918.38 524.41,927.03 512.57,933.6 507.8,924.92" fill="#62c4fc" stroke="#071722" stroke-width="0.75" stroke-linejoin="round" />
<polyline points="512.57,933.6 510.96,943.32" fill="none" stroke="#071722" stroke-width="0.5" />
<polygon points="559.51,921.98 564.92,931.16 566.56,939.27 551.83,947.42 545.12,935.76 547.94,928.39" fill="#3a7196" stroke="#071722" stroke-width="0.85" stroke-linejoin="round" />
<polygon points="559.51,921.98 564.92,931.16 553.28,937.6 547.94,928.39" fill="#62c4fc" stroke="#071722" stroke-width="0.75" stroke-linejoin="round" />
<polyline points="553.28,937.6 551.83,947.42" fill="none" stroke="#071722" stroke-width="0.5" />
<polygon points="477.04,923.47 483.66,935.98 485.5,944.92 473.74,951.47 465.5,935.59 467.83,928.62" fill="#3a7196" stroke="#071722" stroke-width="0.85" stroke-linejoin="round" />
<polygon points="477.04,923.47 483.66,935.98 474.36,941.16 467.83,928.62" fill="#62c4fc" stroke="#071722" stroke-width="0.75" stroke-linejoin="round" />
<polyline points="474.36,941.16 473.74,951.47" fill="none" stroke="#071722" stroke-width="0.5" />
<polygon points="640.38,924.16 647.61,935.32 649.68,943.9 634.77,952.08 625.79,937.9 628.7,930.59" fill="#3a7196" stroke="#071722" stroke-width="0.85" stroke-linejoin="round" />
<polygon points="640.38,924.16 647.61,935.32 635.83,941.79 628.7,930.59" fill="#62c4fc" stroke="#071722" stroke-width="0.75" stroke-linejoin="round" />
<polyline points="635.83,941.79 634.77,952.08" fill="none" stroke="#071722" stroke-width="0.5" />
<polygon points="582.27,925.61 587.9,934.91 589.59,943.05 574.68,951.28 567.7,939.46 570.57,932.08" fill="#3a7196" stroke="#071722" stroke-width="0.85" stroke-linejoin="round" />
<polygon points="582.27,925.61 587.9,934.91 576.11,941.42 570.57,932.08" fill="#62c4fc" stroke="#071722" stroke-width="0.75" stroke-linejoin="round" />
<polyline points="576.11,941.42 574.68,951.28" fill="none" stroke="#071722" stroke-width="0.5" />
<polygon points="503.94,927.07 508.69,935.76 510.18,943.76 495.26,952.04 489.38,941.01 492.22,933.59" fill="#3a7196" stroke="#071722" stroke-width="0.85" stroke-linejoin="round" />
<polygon points="503.94,927.07 508.69,935.76 496.89,942.32 492.22,933.59" fill="#62c4fc" stroke="#071722" stroke-width="0.75" stroke-linejoin="round" />
<polyline points="496.89,942.32 495.26,952.04" fill="none" stroke="#071722" stroke-width="0.5" />
<polygon points="544.15,930.5 549.45,939.72 551.06,947.85 536.38,955.97 529.8,944.25 532.62,936.89" fill="#3a7196" stroke="#071722" stroke-width="0.85" stroke-linejoin="round" />
<polygon points="544.15,930.5 549.45,939.72 537.84,946.15 532.62,936.89" fill="#62c4fc" stroke="#071722" stroke-width="0.75" stroke-linejoin="round" />
<polyline points="537.84,946.15 536.38,955.97" fill="none" stroke="#071722" stroke-width="0.5" />
<polygon points="624.86,932.7 631.95,943.91 633.99,952.51 619.12,960.66 610.31,946.41 613.21,939.11" fill="#3a7196" stroke="#071722" stroke-width="0.85" stroke-linejoin="round" />
<polygon points="624.86,932.7 631.95,943.91 620.2,950.36 613.21,939.11" fill="#62c4fc" stroke="#071722" stroke-width="0.75" stroke-linejoin="round" />
<polyline points="620.2,950.36 619.12,960.66" fill="none" stroke="#071722" stroke-width="0.5" />
<polygon points="566.72,934.21 572.23,943.56 573.9,951.71 559.03,959.91 552.19,948.04 555.05,940.66" fill="#3a7196" stroke="#071722" stroke-width="0.85" stroke-linejoin="round" />
<polygon points="566.72,934.21 572.23,943.56 560.47,950.04 555.05,940.66" fill="#62c4fc" stroke="#071722" stroke-width="0.75" stroke-linejoin="round" />
<polyline points="560.47,950.04 559.03,959.91" fill="none" stroke="#071722" stroke-width="0.5" />
<polygon points="589.77,938 595.5,947.47 597.22,955.65 582.16,963.93 575.05,951.9 577.95,944.52" fill="#3a7196" stroke="#071722" stroke-width="0.85" stroke-linejoin="round" />
<polygon points="589.77,938 595.5,947.47 583.59,954.02 577.95,944.52" fill="#62c4fc" stroke="#071722" stroke-width="0.75" stroke-linejoin="round" />
<polyline points="583.59,954.02 582.16,963.93" fill="none" stroke="#071722" stroke-width="0.5" />
<polygon points="528.83,938.99 534.02,948.26 535.61,956.39 520.97,964.49 514.53,952.72 517.34,945.36" fill="#3a7196" stroke="#071722" stroke-width="0.85" stroke-linejoin="round" />
<polygon points="528.83,938.99 534.02,948.26 522.45,954.66 517.34,945.36" fill="#62c4fc" stroke="#071722" stroke-width="0.75" stroke-linejoin="round" />
<polyline points="522.45,954.66 520.97,964.49" fill="none" stroke="#071722" stroke-width="0.5" />
<polygon points="551.21,942.78 556.61,952.18 558.25,960.34 543.42,968.51 536.73,956.59 539.57,949.22" fill="#3a7196" stroke="#071722" stroke-width="0.85" stroke-linejoin="round" />
<polygon points="551.21,942.78 556.61,952.18 544.89,958.64 539.57,949.22" fill="#62c4fc" stroke="#071722" stroke-width="0.75" stroke-linejoin="round" />
<polyline points="544.89,958.64 543.42,968.51" fill="none" stroke="#071722" stroke-width="0.5" />
<polygon points="574.06,946.66 579.67,956.18 581.37,964.37 566.35,972.62 559.39,960.54 562.27,953.16" fill="#3a7196" stroke="#071722" stroke-width="0.85" stroke-linejoin="round" />
<polygon points="574.06,946.66 579.67,956.18 567.8,962.71 562.27,953.16" fill="#62c4fc" stroke="#071722" stroke-width="0.75" stroke-linejoin="round" />
<polyline points="567.8,962.71 566.35,972.62" fill="none" stroke="#071722" stroke-width="0.5" />
<polygon points="513.56,947.46 518.64,956.77 520.2,964.92 505.6,972.99 499.3,961.16 502.1,953.81" fill="#3a7196" stroke="#071722" stroke-width="0.85" stroke-linejoin="round" />
<polygon points="513.56,947.46 518.64,956.77 507.1,963.16 502.1,953.81" fill="#62c4fc" stroke="#071722" stroke-width="0.75" stroke-linejoin="round" />
<polyline points="507.1,963.16 505.6,972.99" fill="none" stroke="#071722" stroke-width="0.5" />
<polygon points="597.4,950.62 603.23,960.26 604.98,968.48 589.77,976.82 582.53,964.57 585.46,957.18" fill="#3a7196" stroke="#071722" stroke-width="0.85" stroke-linejoin="round" />
<polygon points="597.4,950.62 603.23,960.26 591.21,966.86 585.46,957.18" fill="#62c4fc" stroke="#071722" stroke-width="0.75" stroke-linejoin="round" />
<polyline points="591.21,966.86 589.77,976.82" fill="none" stroke="#071722" stroke-width="0.5" />
<polygon points="535.75,951.33 541.03,960.77 542.64,968.94 527.86,977.1 521.31,965.11 524.14,957.75" fill="#3a7196" stroke="#071722" stroke-width="0.85" stroke-linejoin="round" />
<polygon points="535.75,951.33 541.03,960.77 529.34,967.22 524.14,957.75" fill="#62c4fc" stroke="#071722" stroke-width="0.75" stroke-linejoin="round" />
<polyline points="529.34,967.22 527.86,977.1" fill="none" stroke="#071722" stroke-width="0.5" />
<polygon points="558.4,955.29 563.9,964.86 565.56,973.06 550.59,981.29 543.78,969.15 546.65,961.77" fill="#3a7196" stroke="#071722" stroke-width="0.85" stroke-linejoin="round" />
<polygon points="558.4,955.29 563.9,964.86 552.06,971.37 546.65,961.77" fill="#62c4fc" stroke="#071722" stroke-width="0.75" stroke-linejoin="round" />
<polyline points="552.06,971.37 550.59,981.29" fill="none" stroke="#071722" stroke-width="0.5" />
<polygon points="581.54,959.34 587.25,969.03 588.97,977.26 573.81,985.57 566.72,973.27 569.64,965.88" fill="#3a7196" stroke="#071722" stroke-width="0.85" stroke-linejoin="round" />
<polygon points="581.54,959.34 587.25,969.03 575.26,975.61 569.64,965.88" fill="#62c4fc" stroke="#071722" stroke-width="0.75" stroke-linejoin="round" />
<polyline points="575.26,975.61 573.81,985.57" fill="none" stroke="#071722" stroke-width="0.5" />
<polygon points="520.33,959.86 525.5,969.34 527.09,977.52 512.35,985.65 505.94,973.62 508.76,966.26" fill="#3a7196" stroke="#071722" stroke-width="0.85" stroke-linejoin="round" />
<polygon points="520.33,959.86 525.5,969.34 513.85,975.77 508.76,966.26" fill="#62c4fc" stroke="#071722" stroke-width="0.75" stroke-linejoin="round" />
<polyline points="513.85,975.77 512.35,985.65" fill="none" stroke="#071722" stroke-width="0.5" />
<polygon points="542.79,963.9 548.17,973.51 549.81,981.72 534.88,989.93 528.21,977.73 531.07,970.36" fill="#3a7196" stroke="#071722" stroke-width="0.85" stroke-linejoin="round" />
<polygon points="542.79,963.9 548.17,973.51 536.37,980 531.07,970.36" fill="#62c4fc" stroke="#071722" stroke-width="0.75" stroke-linejoin="round" />
<polyline points="536.37,980 534.88,989.93" fill="none" stroke="#071722" stroke-width="0.5" />
<polygon points="565.72,968.03 571.32,977.77 573.01,986.01 557.9,994.3 550.96,981.93 553.86,974.56" fill="#3a7196" stroke="#071722" stroke-width="0.85" stroke-linejoin="round" />
<polygon points="565.72,968.03 571.32,977.77 559.37,984.33 553.86,974.56" fill="#62c4fc" stroke="#071722" stroke-width="0.75" stroke-linejoin="round" />
<polyline points="559.37,984.33 557.9,994.3" fill="none" stroke="#071722" stroke-width="0.5" />
<polygon points="527.22,972.49 532.49,982.14 534.1,990.36 519.22,998.54 512.69,986.29 515.54,978.93" fill="#3a7196" stroke="#071722" stroke-width="0.85" stroke-linejoin="round" />
<polygon points="527.22,972.49 532.49,982.14 520.72,988.61 515.54,978.93" fill="#62c4fc" stroke="#071722" stroke-width="0.75" stroke-linejoin="round" />
<polyline points="520.72,988.61 519.22,998.54" fill="none" stroke="#071722" stroke-width="0.5" />
<polygon points="549.96,976.7 555.44,986.48 557.1,994.74 542.03,1003 535.24,990.58 538.13,983.21" fill="#3a7196" stroke="#071722" stroke-width="0.85" stroke-linejoin="round" />
<polygon points="549.96,976.7 555.44,986.48 543.52,993.02 538.13,983.21" fill="#62c4fc" stroke="#071722" stroke-width="0.75" stroke-linejoin="round" />
<polyline points="543.52,993.02 542.03,1003" fill="none" stroke="#071722" stroke-width="0.5" />
<polygon points="502.01,965.18 519.96,999 524.53,1013.02 512.12,1019.83 489.73,976.78 492.48,970.46" fill="#3a7196" stroke="#071722" stroke-width="0.85" stroke-linejoin="round" />
<polygon points="502.01,965.18 519.96,999 510.19,1004.37 492.48,970.46" fill="#62c4fc" stroke="#071722" stroke-width="0.75" stroke-linejoin="round" />
<polyline points="510.19,1004.37 512.12,1019.83" fill="none" stroke="#071722" stroke-width="0.5" />
<polygon points="534.24,985.34 539.6,995.17 541.24,1003.43 526.21,1011.67 519.56,999.19 522.44,991.83" fill="#3a7196" stroke="#071722" stroke-width="0.85" stroke-linejoin="round" />
<polygon points="534.24,985.34 539.6,995.17 527.72,1001.69 522.44,991.83" fill="#62c4fc" stroke="#071722" stroke-width="0.75" stroke-linejoin="round" />
<polyline points="527.72,1001.69 526.21,1011.67" fill="none" stroke="#071722" stroke-width="0.5" />
</svg>
<div class="abs" style="left:0;top:0;width:1920px;height:8px;background:#000"></div>
<div class="abs" style="left:1920px;top:0;width:8px;height:1056px;background:#fafafa"></div>
<div class="abs" style="left:1920px;top:0;width:8px;height:26px;background:#fff"></div>
<div class="abs" style="left:0;top:8px;width:1920px;height:23px;background:#fff"></div>
<div class="abs" style="left:0;top:31px;width:1920px;height:59px;background:#f0f0f0;border-bottom:1px solid #c9c9c9"></div>
<div class="abs" style="left:23px;top:13px;font-size:11.5px;line-height:15px;color:#000;letter-spacing:-0.2px">FM77_001*</div>
<div class="abs" style="left:1912px;top:91px;width:8px;height:957px;background:#b1bbba"></div>
<div class="abs" style="left:1912px;top:514px;width:8px;height:150px;background:#0a96d2"></div>
<div class="abs" style="left:0;top:1048px;width:1920px;height:8px;background:#101010"></div>
<div class="abs" style="left:48px;top:1048px;width:344px;height:8px;background:#f2f2f2;border-top:1px solid #bdbdbd;box-sizing:border-box"></div>
<div class="abs" style="left:932px;top:1048px;width:48px;height:8px;background:#2e2e2e"></div>
<div class="abs" style="left:1915px;top:1048px;width:1px;height:8px;background:#666"></div>
<div class="abs" style="left:1822px;top:1054px;width:6px;height:2px;background:#cfcfcf"></div><div class="abs" style="left:1831px;top:1054px;width:9px;height:2px;background:#cfcfcf"></div>
<div class="abs" style="left:1654px;top:44px;width:136px;height:35px;background:#0a98d0;border-radius:2px;color:#fff;text-align:center;font-weight:bold"><div style="font-size:11.5px;line-height:14px;margin-top:4px;letter-spacing:-0.6px">プレミアム版登録</div><div style="font-size:9px;line-height:12px;margin-top:2px;font-weight:normal">(商業利用向け)</div></div>
<div class="abs" style="left:1796px;top:44px;width:79px;height:35px;background:#0a98d0;border-radius:2px;color:#fff;text-align:center;font-weight:bold;font-size:11px;line-height:35px;letter-spacing:-1px">サインイン</div>
<div class="abs" style="left:1881px;top:44px;width:34px;height:34px;box-sizing:border-box;border:1px solid #adadad;background:linear-gradient(#f6f6f6,#d4d4d4);color:#444;text-align:center;font-size:19px;line-height:32px">?</div>
<div class="abs" style="left:64px;top:44px;font-size:13.3px;line-height:16px;color:#6a6a6a;letter-spacing:-0.6px">AUTODESK<span style="font-size:7px;vertical-align:6px">®</span></div>
<div class="abs" style="left:64px;top:59px;font-size:14px;line-height:16px;color:#5a5a5a;font-weight:bold;letter-spacing:0px">123D<span style="font-size:7px;vertical-align:6px">®</span> DESIGN</div>
<div class="abs" style="left:1741px;top:968px;width:155px;height:22px;background:#c8c8c8;color:#111;text-align:center;font-weight:bold;font-size:12px;line-height:22px;letter-spacing:-0.9px">グリッドを編集</div>
<div class="abs" style="left:1741px;top:995px;width:75px;height:22px;box-sizing:border-box;border:2px solid #c6c6c6;background:#fff;text-align:center;font-size:12px;line-height:19px;color:#111;font-weight:bold">1</div>
<div class="abs" style="left:1821px;top:995px;width:75px;height:22px;box-sizing:border-box;border:2px solid #c6c6c6;background:#fff;text-align:center;font-size:12px;line-height:19px;color:#111;font-weight:bold">1</div>
<div class="abs" style="left:1741px;top:1022px;width:75px;text-align:center;font-size:8.5px;line-height:12px;color:#111;font-weight:bold;letter-spacing:-0.7px">長さスナップ</div>
<div class="abs" style="left:1821px;top:1022px;width:75px;text-align:center;font-size:8.5px;line-height:12px;color:#111;font-weight:bold;letter-spacing:-0.7px">角度スナップ</div>
<div class="abs" style="left:1852px;top:209px;width:37px;height:389px;box-sizing:border-box;border:2px solid #c9c9c9;background:#ececec"></div>
<svg class="abs" style="left:0;top:0" width="1928" height="1056" viewBox="0 0 1928 1056">
<defs><linearGradient id="lg" x1="0" y1="0" x2="1" y2="1"><stop offset="0" stop-color="#cfdde3"/><stop offset="1" stop-color="#9db7c3"/></linearGradient><linearGradient id="sep" x1="0" y1="0" x2="0" y2="1"><stop offset="0" stop-color="#aaa" stop-opacity="0"/><stop offset="0.5" stop-color="#999"/><stop offset="1" stop-color="#aaa" stop-opacity="0"/></linearGradient><linearGradient id="seph" x1="0" y1="0" x2="1" y2="0"><stop offset="0" stop-color="#999" stop-opacity="0"/><stop offset="0.5" stop-color="#888"/><stop offset="1" stop-color="#999" stop-opacity="0"/></linearGradient><linearGradient id="vcL" x1="0" y1="0" x2="0" y2="1"><stop offset="0" stop-color="#f4f4f4"/><stop offset="1" stop-color="#cfcfcf"/></linearGradient><linearGradient id="vcF" x1="0" y1="0" x2="0" y2="1"><stop offset="0" stop-color="#f8f8f8"/><stop offset="1" stop-color="#d6d6d6"/></linearGradient><filter id="vb" x="-30%" y="-30%" width="160%" height="160%"><feGaussianBlur stdDeviation="4"/></filter></defs>
<polygon points="2,13 18,13 10.5,26" fill="#1a8fcb"/><polygon points="2,13 10,16 10.5,26" fill="#0d6fa3"/><polygon points="2,13 18,13 10,16" fill="#7fd0f0"/>
<g stroke="#111" stroke-width="1" fill="none"><path d="M1799 18.5H1809"/><rect x="1844.5" y="15.5" width="7" height="7"/><path d="M1846.5 15.5V13.5H1853.5V20.5H1851.5"/><path d="M1889.5 13.5L1899.5 23.5M1899.5 13.5L1889.5 23.5"/></g>
<rect x="8" y="39" width="43" height="43" rx="7" fill="url(#lg)"/>
<polygon points="13,47 46,47 30,78" fill="#1a94d2"/><polygon points="13,47 30,56 30,78" fill="#1583bd"/><polygon points="30,56 46,47 30,78" fill="#0e6a9c"/><polygon points="13,47 46,47 30,56" fill="#8ddcf8"/>
<polygon points="30,78 36,82 44,82 51,75 51,60 46,47" fill="#6f9db2" opacity="0.55"/>
<path d="M199.5 62.5L205 66.5L210.5 62.5" stroke="#222" stroke-width="2" fill="none"/>
<path d="M615.3 58L624.5 52.4V56.2C630 56 634.3 58.5 636.3 62.5L634.5 63.8C632 60.6 629 59.5 624.5 59.7V63.8Z" fill="#1e1e1e"/>
<path d="M678.7 58L669.5 52.4V56.2C664 56 659.7 58.5 657.7 62.5L659.5 63.8C662 60.6 665 59.5 669.5 59.7V63.8Z" fill="#b9b9b9"/>
<rect x="710" y="45" width="1" height="30" fill="url(#sep)"/>
<rect x="796" y="45" width="1" height="30" fill="url(#sep)"/>
<rect x="1269" y="45" width="1" height="30" fill="url(#sep)"/>
<rect x="744.5" y="49.5" width="20" height="20" fill="none" stroke="#222" stroke-width="1" stroke-dasharray="1 1.6"/>
<g stroke="#2c2c2c" stroke-width="0.8" stroke-linejoin="round"><polygon points="753.5,55.31 759.3,58.5 753.5,61.69 747.7,58.5" fill="#fff"/><polygon points="747.7,58.5 753.5,61.69 753.5,67.69 747.7,64.5" fill="#707070"/><polygon points="759.3,58.5 753.5,61.69 753.5,67.69 759.3,64.5" fill="#2c2c2c"/></g>
<path d="M761.5 46.5V54.5M757.5 50.5H765.5" stroke="#222" stroke-width="0.9" fill="none"/><path d="M761.5 45l1.6 2h-3.2zM761.5 56l1.6-2h-3.2zM756 50.5l2-1.6v3.2zM767 50.5l-2-1.6v3.2z" fill="#222"/>
<circle cx="846.5" cy="55.5" r="6.3" fill="#f4f4f4" stroke="#333" stroke-width="1"/>
<g stroke="#2c2c2c" stroke-width="0.8" stroke-linejoin="round"><polygon points="838.5,52.825 847.0,57.5 838.5,62.175 830.0,57.5" fill="#fff"/><polygon points="830.0,57.5 838.5,62.175 838.5,71.175 830.0,66.5" fill="#707070"/><polygon points="847.0,57.5 838.5,62.175 838.5,71.175 847.0,66.5" fill="#2c2c2c"/></g>
<path d="M879 53C872 54 871 63 877 66C881 68 885 64 887 60" fill="none" stroke="#222" stroke-width="1.2"/><circle cx="880" cy="53" r="2.2" fill="#222"/><circle cx="876" cy="64.5" r="2.2" fill="#222"/>
<path d="M893 48l3.5 2.5l-9 12.5l-4.5 2.5l1-5z" fill="#222"/>
<g stroke="#2c2c2c" stroke-width="0.8" stroke-linejoin="round"><polygon points="926,53.6 934,58.0 926,62.4 918,58.0" fill="#fff"/><polygon points="918,58.0 926,62.4 926,71.4 918,67.0" fill="#707070"/><polygon points="934,58.0 926,62.4 926,71.4 934,67.0" fill="#2c2c2c"/></g>
<path d="M931 46l3 1.5l-5.5 10l-3 1l0.5-3z" fill="#222"/>
<g stroke="#2c2c2c" stroke-width="0.8" stroke-linejoin="round"><polygon points="965,52.1 973,56.5 965,60.9 957,56.5" fill="#fff"/><polygon points="957,56.5 965,60.9 965,69.9 957,65.5" fill="#707070"/><polygon points="973,56.5 965,60.9 965,69.9 973,65.5" fill="#2c2c2c"/></g>
<path d="M975.5 47V56.5H983.5" stroke="#222" stroke-width="1.1" fill="none"/><path d="M975.5 45.5l2.2 3h-4.4zM985 56.5l-3-2.2v4.4z" fill="#222"/>
<g stroke="#2c2c2c" stroke-width="0.6" stroke-linejoin="round"><polygon points="1007,49.489999999999995 1011.2,51.8 1007,54.11 1002.8,51.8" fill="#fff"/><polygon points="1002.8,51.8 1007,54.11 1007,58.510000000000005 1002.8,56.2" fill="#707070"/><polygon points="1011.2,51.8 1007,54.11 1007,58.510000000000005 1011.2,56.2" fill="#2c2c2c"/></g>
<g stroke="#2c2c2c" stroke-width="0.6" stroke-linejoin="round"><polygon points="1017.5,49.489999999999995 1021.7,51.8 1017.5,54.11 1013.3,51.8" fill="#fff"/><polygon points="1013.3,51.8 1017.5,54.11 1017.5,58.510000000000005 1013.3,56.2" fill="#707070"/><polygon points="1021.7,51.8 1017.5,54.11 1017.5,58.510000000000005 1021.7,56.2" fill="#2c2c2c"/></g>
<g stroke="#2c2c2c" stroke-width="0.6" stroke-linejoin="round"><polygon points="1007,60.489999999999995 1011.2,62.8 1007,65.11 1002.8,62.8" fill="#fff"/><polygon points="1002.8,62.8 1007,65.11 1007,69.51 1002.8,67.2" fill="#707070"/><polygon points="1011.2,62.8 1007,65.11 1007,69.51 1011.2,67.2" fill="#2c2c2c"/></g>
<g stroke="#2c2c2c" stroke-width="0.6" stroke-linejoin="round"><polygon points="1017.5,60.489999999999995 1021.7,62.8 1017.5,65.11 1013.3,62.8" fill="#fff"/><polygon points="1013.3,62.8 1017.5,65.11 1017.5,69.51 1013.3,67.2" fill="#707070"/><polygon points="1021.7,62.8 1017.5,65.11 1017.5,69.51 1021.7,67.2" fill="#2c2c2c"/></g>
<circle cx="1060" cy="56.5" r="5.6" fill="#f4f4f4" stroke="#333" stroke-width="1"/>
<g stroke="#2c2c2c" stroke-width="0.8" stroke-linejoin="round"><polygon points="1053,56.285 1059.3,59.75 1053,63.215 1046.7,59.75" fill="#fff"/><polygon points="1046.7,59.75 1053,63.215 1053,69.715 1046.7,66.25" fill="#707070"/><polygon points="1059.3,59.75 1053,63.215 1053,69.715 1059.3,66.25" fill="#2c2c2c"/></g>
<rect x="1045" y="49" width="2" height="2" fill="#222"/>
<rect x="1065" y="49" width="2" height="2" fill="#222"/>
<rect x="1045" y="69" width="2" height="2" fill="#222"/>
<rect x="1065" y="69" width="2" height="2" fill="#222"/>
<g stroke="#2c2c2c" stroke-width="0.8" stroke-linejoin="round"><polygon points="1102,49.9 1109,53.75 1102,57.6 1095,53.75" fill="#fff"/><polygon points="1095,53.75 1102,57.6 1102,65.1 1095,61.25" fill="#8a8a8a"/><polygon points="1109,53.75 1102,57.6 1102,65.1 1109,61.25" fill="#555"/></g>
<g stroke="#2c2c2c" stroke-width="0.8" stroke-linejoin="round"><polygon points="1096,52.85 1104,57.25 1096,61.65 1088,57.25" fill="#fff"/><polygon points="1088,57.25 1096,61.65 1096,70.15 1088,65.75" fill="#707070"/><polygon points="1104,57.25 1096,61.65 1096,70.15 1104,65.75" fill="#2c2c2c"/></g>
<g stroke="#2c2c2c" stroke-width="0.8" stroke-linejoin="round"><polygon points="1139,50.55 1148,55.5 1139,60.45 1130,55.5" fill="#fff"/><polygon points="1130,55.5 1139,60.45 1139,70.45 1130,65.5" fill="#707070"/><polygon points="1148,55.5 1139,60.45 1139,70.45 1148,65.5" fill="#2c2c2c"/></g>
<rect x="1146.5" y="49.5" width="5" height="20.5" fill="#fff" stroke="#222" stroke-width="1"/><path d="M1146.5 53h2.5M1146.5 56h2.5M1146.5 59h2.5M1146.5 62h2.5M1146.5 65h2.5" stroke="#222" stroke-width="0.8"/>
<path d="M1174.5 51H1193V55.5H1186.5V70H1181V55.5H1174.5Z" fill="#222"/>
<g transform="rotate(40 1227 58)"><path d="M1219 68V58A8 8 0 0 1 1235 58V68H1230.5V58A3.5 3.5 0 0 0 1223.5 58V68Z" fill="#f4f4f4" stroke="#333" stroke-width="1"/><rect x="1219" y="64" width="4.5" height="4.5" fill="#222"/><rect x="1230.5" y="64" width="4.5" height="4.5" fill="#222"/></g>
<g stroke="#222" stroke-width="0.8">
<polygon points="1302,68.0 1312,62.5 1324,67.0 1314,73.0" fill="#444"/>
<polygon points="1302,65.4 1312,59.9 1324,64.4 1314,70.4" fill="#ddd"/>
<polygon points="1302,62.8 1312,57.3 1324,61.8 1314,67.8" fill="#444"/>
<polygon points="1302,60.2 1312,54.7 1324,59.2 1314,65.2" fill="#ddd"/>
<polygon points="1302,57.6 1312,52.1 1324,56.6 1314,62.6" fill="#444"/>
<polygon points="1302,55.0 1312,49.5 1324,54.0 1314,60.0" fill="#fff"/>
</g>
<polygon points="774,79 774,82 771,82" fill="#8a8a8a"/>
<polygon points="860,79 860,82 857,82" fill="#8a8a8a"/>
<polygon points="903,79 903,82 900,82" fill="#8a8a8a"/>
<polygon points="946,79 946,82 943,82" fill="#8a8a8a"/>
<polygon points="989,79 989,82 986,82" fill="#8a8a8a"/>
<polygon points="1031,79 1031,82 1028,82" fill="#8a8a8a"/>
<polygon points="1075,79 1075,82 1072,82" fill="#8a8a8a"/>
<polygon points="1117,79 1117,82 1114,82" fill="#8a8a8a"/>
<polygon points="1913.5,588.5 1918.5,584 1918.5,593" fill="#fff"/>
<path d="M1871 222.5V239.5M1862.5 231H1879.5" stroke="#222" stroke-width="1.1"/><path d="M1871 220.5l2.4 3.4h-4.8zM1871 241.5l2.4-3.4h-4.8zM1860.5 231l3.4-2.4v4.8zM1881.5 231l-3.4-2.4v4.8z" fill="#222"/>
<g stroke="#2c2c2c" stroke-width="0.8" stroke-linejoin="round"><polygon points="1870.5,260.42 1876.1,263.5 1870.5,266.58 1864.9,263.5" fill="#fff"/><polygon points="1864.9,263.5 1870.5,266.58 1870.5,272.58 1864.9,269.5" fill="#707070"/><polygon points="1876.1,263.5 1870.5,266.58 1870.5,272.58 1876.1,269.5" fill="#2c2c2c"/></g>
<path d="M1873 256.2A10.3 10.3 0 0 1 1880.3 270.5M1868 276.8A10.3 10.3 0 0 1 1860.7 262.5" fill="none" stroke="#222" stroke-width="1.2"/><path d="M1870.2 256l4-2.3l0.3 4.4zM1870.8 277l-4 2.3l-0.3-4.4z" fill="#222"/>
<circle cx="1868.5" cy="298.5" r="6.6" fill="#fff" stroke="#222" stroke-width="1.3"/><path d="M1873.6 303.6l5.2 5.2" stroke="#222" stroke-width="3.6"/>
<rect x="1857" y="322" width="26" height="1" fill="url(#seph)"/>
<g stroke="#2c2c2c" stroke-width="0.8" stroke-linejoin="round"><polygon points="1871,339.42 1876.6,342.5 1871,345.58 1865.4,342.5" fill="#fff"/><polygon points="1865.4,342.5 1871,345.58 1871,351.58 1865.4,348.5" fill="#707070"/><polygon points="1876.6,342.5 1871,345.58 1871,351.58 1876.6,348.5" fill="#2c2c2c"/></g>
<path d="M1861.5 340.5V335.5H1866M1876 335.5H1880.5V340.5M1880.5 349.5V354.5H1876M1866 354.5H1861.5V349.5" fill="none" stroke="#222" stroke-width="1.1"/>
<circle cx="1875.5" cy="375.5" r="5.8" fill="#f6f6f6" stroke="#333" stroke-width="0.9"/>
<g stroke="#2c2c2c" stroke-width="0.8" stroke-linejoin="round"><polygon points="1869,372.58500000000004 1876.3,376.6 1869,380.615 1861.7,376.6" fill="#e2e2e2"/><polygon points="1861.7,376.6 1869,380.615 1869,388.41499999999996 1861.7,384.4" fill="#5a5a5a"/><polygon points="1876.3,376.6 1869,380.615 1869,388.41499999999996 1876.3,384.4" fill="#262626"/></g>
<path d="M1869 376.5V384.5M1869 376.5L1862 380M1869 376.5L1876 380" stroke="#999" stroke-width="0.5" fill="none"/>
<path d="M1860.8 415Q1871 403.5 1881.2 415Q1871 426.5 1860.8 415Z" fill="#fff" stroke="#2a2a2a" stroke-width="1.1"/><circle cx="1871" cy="415" r="4.3" fill="#555"/>
<path d="M1861 443.5H1875L1881 456.5H1864.5Z" fill="#2a2a2a"/>
<polygon points="1862.0,444.5 1864.6,444.5 1865.6,447.5 1863.0,447.5" fill="#fff"/>
<polygon points="1865.7,444.5 1868.3,444.5 1869.3,447.5 1866.7,447.5" fill="#fff"/>
<polygon points="1863.2,448.5 1865.8,448.5 1866.8,451.5 1864.2,451.5" fill="#fff"/>
<polygon points="1866.9,448.5 1869.5,448.5 1870.5,451.5 1867.9,451.5" fill="#fff"/>
<polygon points="1870.6,448.5 1873.2,448.5 1874.2,451.5 1871.6,451.5" fill="#fff"/>
<polygon points="1874.2,448.5 1876.8,448.5 1877.8,451.5 1875.2,451.5" fill="#fff"/>
<polygon points="1864.3,452.5 1866.9,452.5 1867.9,455.5 1865.3,455.5" fill="#fff"/>
<polygon points="1868.0,452.5 1870.6,452.5 1871.6,455.5 1869.0,455.5" fill="#fff"/>
<polygon points="1871.7,452.5 1874.3,452.5 1875.3,455.5 1872.7,455.5" fill="#fff"/>
<polygon points="1875.4,452.5 1878.0,452.5 1879.0,455.5 1876.4,455.5" fill="#fff"/>
<path d="M1867.5 445.5Q1875 438 1882.5 445.5Q1875 453 1867.5 445.5Z" fill="#fff" stroke="#2a2a2a" stroke-width="0.9"/><circle cx="1875" cy="445.5" r="3" fill="#666"/>
<path d="M1861.5 479H1867L1868.5 476H1874L1875.5 479H1880.5V494H1861.5Z" fill="#383838"/><circle cx="1871" cy="486.5" r="4.6" fill="#383838" stroke="#fff" stroke-width="1.7"/><rect x="1876.5" y="480.5" width="2.5" height="2" fill="#fff"/>
<rect x="1857" y="506" width="26" height="1" fill="url(#seph)"/>
<g stroke="#2c2c2c" stroke-width="0.7" stroke-linejoin="round"><polygon points="1861,529 1868,525 1878,531 1871,535.5" fill="#fff"/><polygon points="1861,529 1871,535.5 1871,543.5 1861,536.5" fill="#6a6a6a"/><polygon points="1871,535.5 1878,531 1878,539 1871,543.5" fill="#2a2a2a"/><path d="M1864.5 527L1874.5 533.2" fill="none"/></g>
<g transform="rotate(40 1875 524)"><path d="M1870.5 529.5V522.5A4.5 4.5 0 0 1 1879.5 522.5V529.5H1876.8V522.5A1.8 1.8 0 0 0 1873.2 522.5V529.5Z" fill="#f4f4f4" stroke="#333" stroke-width="0.8"/><rect x="1870.5" y="527.3" width="2.7" height="2.2" fill="#222"/><rect x="1876.8" y="527.3" width="2.7" height="2.2" fill="#222"/></g>
<rect x="1860" y="521" width="2" height="2" fill="#222"/>
<rect x="1860" y="542.5" width="2" height="2" fill="#222"/>
<rect x="1879.5" y="542.5" width="2" height="2" fill="#222"/>
<g stroke="#2c2c2c" stroke-width="0.5" stroke-linejoin="round"><polygon points="1862.5,559.96 1865.3,561.5 1862.5,563.04 1859.7,561.5" fill="#333"/><polygon points="1859.7,561.5 1862.5,563.04 1862.5,566.04 1859.7,564.5" fill="#333"/><polygon points="1865.3,561.5 1862.5,563.04 1862.5,566.04 1865.3,564.5" fill="#222"/></g>
<path d="M1861.5 567C1861 575 1867 580 1880 579" fill="none" stroke="#222" stroke-width="1.3" stroke-dasharray="1.2 1.2"/>
<g transform="rotate(45 1872 570)"><path d="M1866 577V568A6 6 0 0 1 1878 568V577H1874.6V568A2.6 2.6 0 0 0 1869.4 568V577Z" fill="#f0f0f0" stroke="#2a2a2a" stroke-width="1"/><rect x="1866" y="574" width="3.4" height="3" fill="#222"/><rect x="1874.6" y="574" width="3.4" height="3" fill="#222"/></g>
<path d="M1862.5 581L1882 560" stroke="#222" stroke-width="1.6"/>
<ellipse cx="1860" cy="176" rx="34" ry="12" fill="#000" opacity="0.14" filter="url(#vb)"/>
<g stroke="#b5b5b5" stroke-width="0.8" stroke-dasharray="5 2.5" stroke-linejoin="round">
<polygon points="1824.2,120.4 1865.9,110 1893.8,127.5 1849.8,139.8" fill="#f3f3f3"/>
<polygon points="1824.2,120.4 1849.8,139.8 1850.7,184.3 1826.6,156.8" fill="url(#vcL)"/>
<polygon points="1849.8,139.8 1893.8,127.5 1890.5,165.3 1850.7,184.3" fill="url(#vcF)"/></g>
<polygon points="1844,138 1852,134.5 1858,138 1858,146.5 1850.5,149.5 1844.5,145" fill="#a8dcf0"/>
<g font-family="'Liberation Sans','Noto Sans CJK JP',sans-serif" fill="#1a1a1a">
<text transform="matrix(1,-0.28,0.55,0.42,1858,124)" font-size="26" text-anchor="middle" y="9">上</text>
<text transform="matrix(0.55,0.5,0,1,1837,151)" font-size="22" text-anchor="middle" y="8">左</text>
<text transform="matrix(1,-0.3,0,1,1871,156)" font-size="24" text-anchor="middle" y="9">前</text>
</g>
</svg>
</body></html>
